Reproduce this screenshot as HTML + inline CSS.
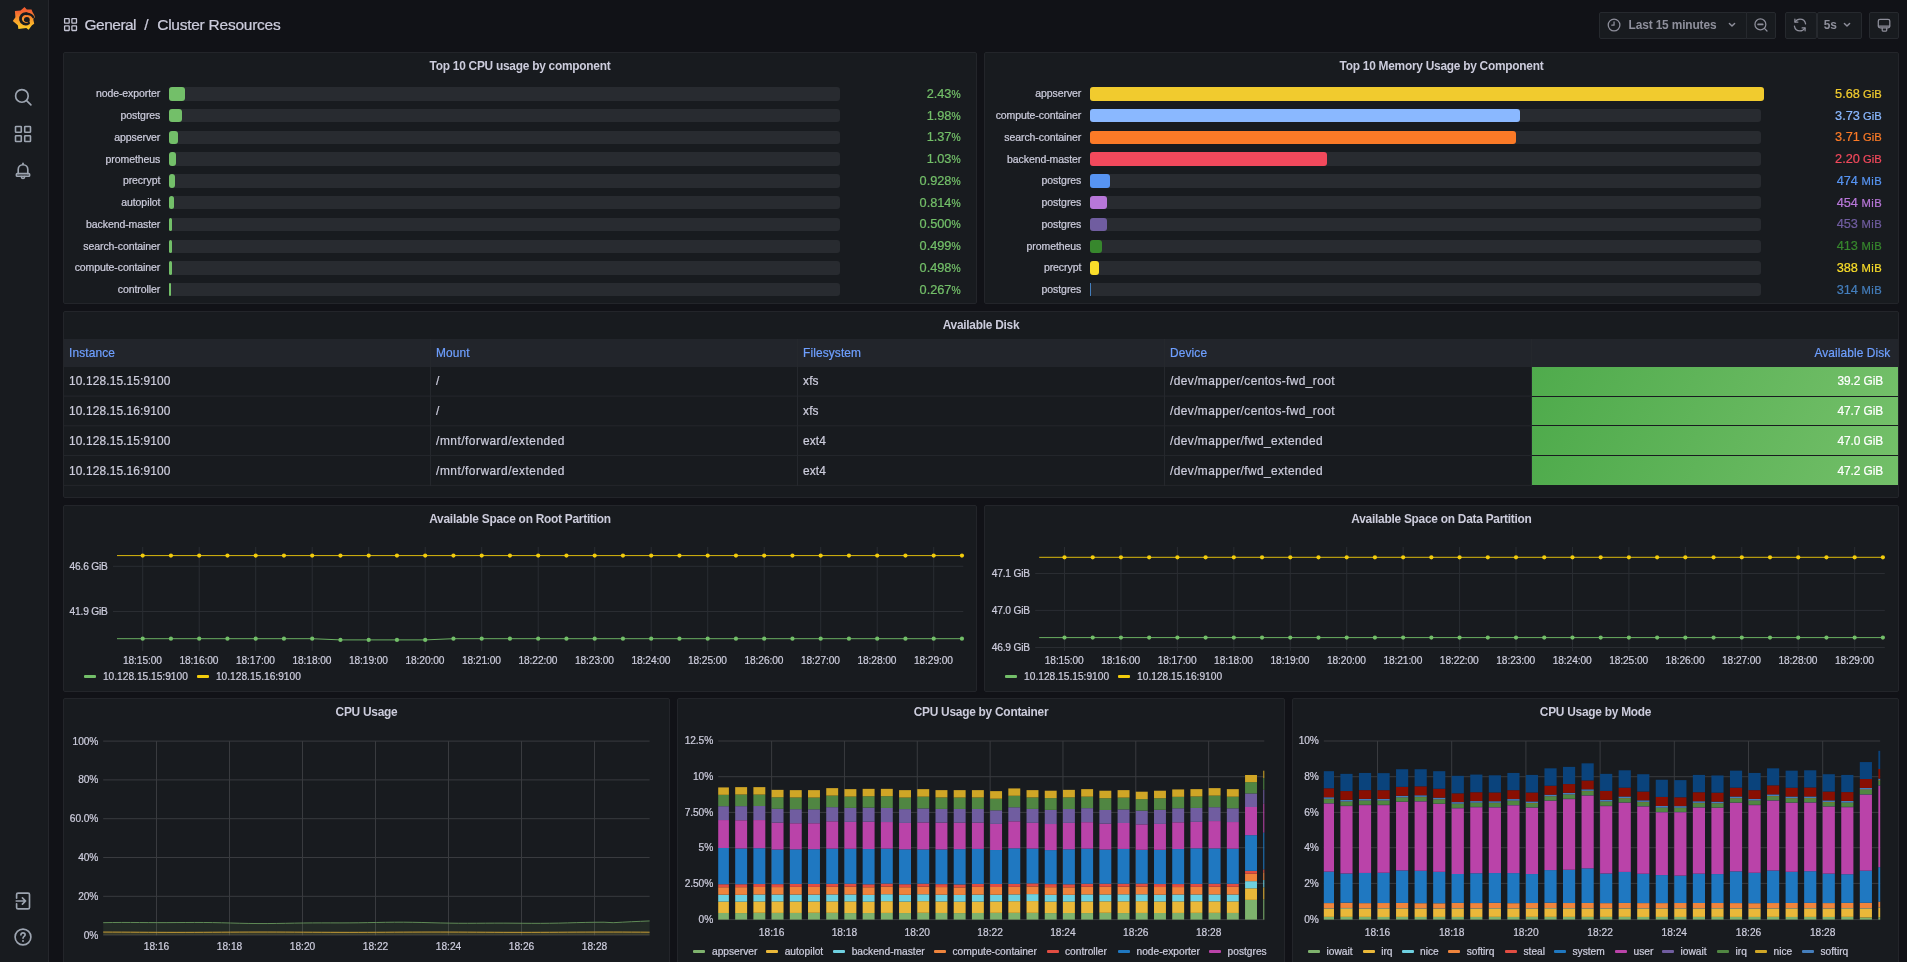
<!DOCTYPE html>
<html lang="en"><head><meta charset="utf-8"><title>Cluster Resources - Grafana</title>
<style>
html,body{margin:0;padding:0}
html{width:1907px;height:962px;overflow:hidden;background:#111217}
body{-webkit-text-stroke:0.22px;position:relative;width:1907px;height:962px;overflow:hidden;background:#111217;font-family:"Liberation Sans",sans-serif;color:#ccccdc;font-size:11.9px}
.panel{position:absolute;background:#181b1f;border:1px solid #23252a;border-radius:2px;box-sizing:border-box}
.btn{position:absolute;background:#181b1f;border:1px solid #26292e;box-sizing:border-box;top:12px;height:27px}
svg{position:absolute;overflow:visible}
.ic{fill:none;stroke:#9da5b1;stroke-width:1.65;stroke-linecap:round;stroke-linejoin:round}
.ict{fill:none;stroke:#8e8f9b;stroke-width:1.25;stroke-linecap:round;stroke-linejoin:round}
</style></head><body>
<div id="root" style="position:absolute;left:0;top:0;width:1907px;height:962px;overflow:hidden;will-change:transform">

<div style="position:absolute;left:0;top:0;width:48px;height:962px;background:#181b1f;border-right:1px solid #25272c"></div>
<svg style="left:6px;top:2px" width="36" height="34" viewBox="0 0 36 34">
<defs><linearGradient id="lg" gradientUnits="userSpaceOnUse" x1="0" y1="27.8" x2="0" y2="5"><stop offset="0" stop-color="#fcd027"/><stop offset="0.45" stop-color="#f99a2c"/><stop offset="0.8" stop-color="#f46432"/><stop offset="1" stop-color="#f15b2d"/></linearGradient></defs>
<path fill="url(#lg)" d="M18.5 5.0 L20.8 7.4 L25.5 7.6 L26.5 10 L28.1 12.8 L29.0 15.4 L28.1 15.9 L27.3 17.5 L28.2 21.7 L26.0 23.2 L22.6 27.8 L20.3 26.1 L12.4 26.9 L11.8 23.2 L6.8 19.1 L9.4 15.2 L8.9 9.1 L14.6 8.4 Z"/>
<path fill="none" stroke="#181b1f" stroke-width="2.8" stroke-linecap="round" d="M22.57 21.04 A5.17 5.17 0 1 1 20.50 11.71"/>
<path fill="none" stroke="#181b1f" stroke-width="2.2" stroke-linecap="round" d="M20.50 11.71 C22.6 12.0 26.2 12.7 27.3 15.4"/>
<circle cx="20.85" cy="18.0" r="2.95" fill="#181b1f"/>
<path fill="none" stroke="#f8932b" stroke-width="1.0" stroke-linecap="round" d="M17.9 19.3 C18.4 20.3 19.8 20.7 21.2 20.5"/>
</svg>
<svg style="left:13.3px;top:87.3px" width="20" height="20" viewBox="0 0 20 20"><circle class="ic" cx="8.9" cy="8.9" r="6.3"/><path class="ic" d="M13.6 13.6 L17.9 17.9"/></svg>
<svg style="left:13.2px;top:124.19999999999999px" width="20" height="20" viewBox="0 0 20 20"><g transform="translate(10 10) scale(0.96) translate(-10 -10)"><rect class="ic" x="2.2" y="2.2" width="6" height="6" rx="0.6"/><rect class="ic" x="11.8" y="2.2" width="6" height="6" rx="0.6"/><rect class="ic" x="2.2" y="11.8" width="6" height="6" rx="0.6"/><rect class="ic" x="11.8" y="11.8" width="6" height="6" rx="0.6"/></g></svg>
<svg style="left:13.2px;top:161.2px" width="20" height="20" viewBox="0 0 20 20"><path class="ic" d="M5.2 12.6 V8.6 C5.2 5.8 7.3 3.7 10 3.7 C12.7 3.7 14.8 5.8 14.8 8.6 V12.6"/><path class="ic" d="M10 3.5 V2.2"/><rect class="ic" x="3.4" y="12.6" width="13.2" height="2.6" rx="0.8"/><path class="ic" d="M8.3 15.6 C8.5 16.9 9.2 17.5 10 17.5 C10.8 17.5 11.5 16.9 11.7 15.6"/></svg>
<svg style="left:13.100000000000001px;top:890.6px" width="20" height="20" viewBox="0 0 20 20"><path class="ic" d="M3.6 7.2 V3.6 C3.6 2.7 4.2 2.1 5.1 2.1 H15 C15.9 2.1 16.5 2.7 16.5 3.6 V16.4 C16.5 17.3 15.9 17.9 15 17.9 H5.1 C4.2 17.9 3.6 17.3 3.6 16.4 V12.8"/><path class="ic" d="M3.2 10 H12.6 M9.4 6.8 L12.6 10 L9.4 13.2"/></svg>
<svg style="left:13.2px;top:927px" width="20" height="20" viewBox="0 0 20 20"><circle class="ic" cx="10" cy="10" r="7.9"/><path class="ic" d="M7.9 8.0 C7.9 6.6 8.8 5.9 10 5.9 C11.2 5.9 12.1 6.7 12.1 7.8 C12.1 9.4 10 9.3 10 11.2"/><circle cx="10" cy="13.9" r="1" fill="#9da5b1"/></svg>
<svg style="left:63px;top:17px" width="16" height="16" viewBox="0 0 16 16"><g fill="none" stroke="#c4c4d4" stroke-width="1.3"><rect x="1.6" y="1.6" width="4.6" height="4.6" rx="0.4"/><rect x="8.9" y="1.6" width="4.6" height="4.6" rx="0.4"/><rect x="1.6" y="8.9" width="4.6" height="4.6" rx="0.4"/><rect x="8.9" y="8.9" width="4.6" height="4.6" rx="0.4"/></g></svg>
<div style="position:absolute;top:15.20px;height:20px;line-height:20px;font-size:15.5px;color:#ccccdc;white-space:nowrap;letter-spacing:-0.53px;left:84.60px;">General</div>
<div style="position:absolute;top:15.20px;height:20px;line-height:20px;font-size:15.5px;color:#ccccdc;white-space:nowrap;left:144.30px;">/</div>
<div style="position:absolute;top:15.20px;height:20px;line-height:20px;font-size:15.5px;color:#ccccdc;white-space:nowrap;letter-spacing:-0.25px;left:157.20px;">Cluster Resources</div>
<div class="btn" style="left:1599px;width:148px;border-radius:2px 0 0 2px"></div>
<div class="btn" style="left:1746px;width:30px;border-radius:0 2px 2px 0"></div>
<div class="btn" style="left:1785px;width:31.5px;border-radius:2px"></div>
<div class="btn" style="left:1816.6px;width:45.4px;border-radius:2px"></div>
<div class="btn" style="left:1869px;width:30px;border-radius:2px"></div>
<svg style="left:1605.5px;top:16.5px" width="16" height="16" viewBox="0 0 16 16"><circle class="ict" cx="8.05" cy="8.05" r="5.85"/><path class="ict" d="M8.05 4.9 V8.2 H5.8"/></svg>
<div style="position:absolute;top:17.20px;height:16px;line-height:16px;font-size:11.9px;color:#8e8f9b;white-space:nowrap;font-weight:700;-webkit-text-stroke:0;letter-spacing:-0.14px;left:1628.60px;">Last 15 minutes</div>
<svg style="left:1726px;top:19px" width="12" height="12" viewBox="0 0 12 12"><path class="ict" style="stroke-width:1.45" d="M3.4 4.5 L6 7.1 L8.6 4.5"/></svg>
<svg style="left:1752.5px;top:16.5px" width="16" height="16" viewBox="0 0 16 16"><circle class="ict" cx="7.4" cy="7.4" r="5.45"/><path class="ict" d="M11.4 11.4 L14.0 14.0"/><path class="ict" style="stroke-width:1.7" d="M5.1 7.4 H9.7"/></svg>
<svg style="left:1792.4px;top:16.6px" width="16" height="16" viewBox="0 0 16 16"><path class="ict" d="M13.6 6.9 C13.1 4 10.7 2.1 8 2.1 C5.9 2.1 4.2 3.2 3.1 4.9"/><path class="ict" d="M2.9 2.2 V5.1 H5.9"/><path class="ict" d="M2.4 9.1 C2.9 12 5.3 13.9 8 13.9 C10.1 13.9 11.8 12.8 12.9 11.1"/><path class="ict" d="M13.1 13.8 V10.9 H10.1"/></svg>
<div style="position:absolute;top:17.20px;height:16px;line-height:16px;font-size:11.9px;color:#8e8f9b;white-space:nowrap;font-weight:700;-webkit-text-stroke:0;letter-spacing:-0.1px;left:1823.70px;">5s</div>
<svg style="left:1840.8px;top:19px" width="12" height="12" viewBox="0 0 12 12"><path class="ict" style="stroke-width:1.45" d="M3.4 4.5 L6 7.1 L8.6 4.5"/></svg>
<svg style="left:1875.5px;top:16.9px" width="16" height="16" viewBox="0 0 16 16"><rect class="ict" x="2.3" y="2.3" width="11.5" height="8.5" rx="1.8"/><path class="ict" d="M2.4 9.1 H13.7"/><path class="ict" d="M6.2 11.0 V13.3 Q6.2 14 6.9 14 H10 Q10.7 14 10.7 13.3 V11.0"/></svg>
<div class="panel" style="left:63px;top:52px;width:914px;height:252px"></div>
<div style="position:absolute;top:57.70px;height:17px;line-height:17px;font-size:11.9px;color:#ccccdc;white-space:nowrap;font-weight:700;-webkit-text-stroke:0;letter-spacing:-0.25px;left:220.00px;width:600px;text-align:center;">Top 10 CPU usage by component</div>
<div class="panel" style="left:984px;top:52px;width:915px;height:252px"></div>
<div style="position:absolute;top:57.70px;height:17px;line-height:17px;font-size:11.9px;color:#ccccdc;white-space:nowrap;font-weight:700;-webkit-text-stroke:0;letter-spacing:-0.25px;left:1141.50px;width:600px;text-align:center;">Top 10 Memory Usage by Component</div>
<div style="position:absolute;top:86.32px;height:14px;line-height:14px;font-size:10.5px;color:#ccccdc;white-space:nowrap;letter-spacing:-0.08px;right:1746.70px;margin-right:0.08px;">node-exporter</div>
<div style="position:absolute;left:169.00px;top:87.20px;width:671.00px;height:13.45px;background:#282b30;border-radius:3px"></div>
<div style="position:absolute;left:169.00px;top:87.20px;width:16.31px;height:13.45px;background:#73bf69;border-radius:3px"></div>
<div style="position:absolute;top:85.92px;height:16px;line-height:16px;font-size:12.75px;color:#73bf69;white-space:nowrap;right:946.40px;"><span style="font-size:12.75px">2.43</span><span style="font-size:10.3px">%</span></div>
<div style="position:absolute;top:108.08px;height:14px;line-height:14px;font-size:10.5px;color:#ccccdc;white-space:nowrap;letter-spacing:-0.08px;right:1746.70px;margin-right:0.08px;">postgres</div>
<div style="position:absolute;left:169.00px;top:108.96px;width:671.00px;height:13.45px;background:#282b30;border-radius:3px"></div>
<div style="position:absolute;left:169.00px;top:108.96px;width:13.29px;height:13.45px;background:#73bf69;border-radius:3px"></div>
<div style="position:absolute;top:107.69px;height:16px;line-height:16px;font-size:12.75px;color:#73bf69;white-space:nowrap;right:946.40px;"><span style="font-size:12.75px">1.98</span><span style="font-size:10.3px">%</span></div>
<div style="position:absolute;top:129.84px;height:14px;line-height:14px;font-size:10.5px;color:#ccccdc;white-space:nowrap;letter-spacing:-0.08px;right:1746.70px;margin-right:0.08px;">appserver</div>
<div style="position:absolute;left:169.00px;top:130.72px;width:671.00px;height:13.45px;background:#282b30;border-radius:3px"></div>
<div style="position:absolute;left:169.00px;top:130.72px;width:9.19px;height:13.45px;background:#73bf69;border-radius:3px"></div>
<div style="position:absolute;top:129.44px;height:16px;line-height:16px;font-size:12.75px;color:#73bf69;white-space:nowrap;right:946.40px;"><span style="font-size:12.75px">1.37</span><span style="font-size:10.3px">%</span></div>
<div style="position:absolute;top:151.61px;height:14px;line-height:14px;font-size:10.5px;color:#ccccdc;white-space:nowrap;letter-spacing:-0.08px;right:1746.70px;margin-right:0.08px;">prometheus</div>
<div style="position:absolute;left:169.00px;top:152.48px;width:671.00px;height:13.45px;background:#282b30;border-radius:3px"></div>
<div style="position:absolute;left:169.00px;top:152.48px;width:6.91px;height:13.45px;background:#73bf69;border-radius:3px"></div>
<div style="position:absolute;top:151.21px;height:16px;line-height:16px;font-size:12.75px;color:#73bf69;white-space:nowrap;right:946.40px;"><span style="font-size:12.75px">1.03</span><span style="font-size:10.3px">%</span></div>
<div style="position:absolute;top:173.37px;height:14px;line-height:14px;font-size:10.5px;color:#ccccdc;white-space:nowrap;letter-spacing:-0.08px;right:1746.70px;margin-right:0.08px;">precrypt</div>
<div style="position:absolute;left:169.00px;top:174.24px;width:671.00px;height:13.45px;background:#282b30;border-radius:3px"></div>
<div style="position:absolute;left:169.00px;top:174.24px;width:6.23px;height:13.45px;background:#73bf69;border-radius:3px"></div>
<div style="position:absolute;top:172.97px;height:16px;line-height:16px;font-size:12.75px;color:#73bf69;white-space:nowrap;right:946.40px;"><span style="font-size:12.75px">0.928</span><span style="font-size:10.3px">%</span></div>
<div style="position:absolute;top:195.12px;height:14px;line-height:14px;font-size:10.5px;color:#ccccdc;white-space:nowrap;letter-spacing:-0.08px;right:1746.70px;margin-right:0.08px;">autopilot</div>
<div style="position:absolute;left:169.00px;top:196.00px;width:671.00px;height:13.45px;background:#282b30;border-radius:3px"></div>
<div style="position:absolute;left:169.00px;top:196.00px;width:5.46px;height:13.45px;background:#73bf69;border-radius:3px"></div>
<div style="position:absolute;top:194.72px;height:16px;line-height:16px;font-size:12.75px;color:#73bf69;white-space:nowrap;right:946.40px;"><span style="font-size:12.75px">0.814</span><span style="font-size:10.3px">%</span></div>
<div style="position:absolute;top:216.88px;height:14px;line-height:14px;font-size:10.5px;color:#ccccdc;white-space:nowrap;letter-spacing:-0.08px;right:1746.70px;margin-right:0.08px;">backend-master</div>
<div style="position:absolute;left:169.00px;top:217.76px;width:671.00px;height:13.45px;background:#282b30;border-radius:3px"></div>
<div style="position:absolute;left:169.00px;top:217.76px;width:3.35px;height:13.45px;background:#73bf69;border-radius:3px"></div>
<div style="position:absolute;top:216.48px;height:16px;line-height:16px;font-size:12.75px;color:#73bf69;white-space:nowrap;right:946.40px;"><span style="font-size:12.75px">0.500</span><span style="font-size:10.3px">%</span></div>
<div style="position:absolute;top:238.65px;height:14px;line-height:14px;font-size:10.5px;color:#ccccdc;white-space:nowrap;letter-spacing:-0.08px;right:1746.70px;margin-right:0.08px;">search-container</div>
<div style="position:absolute;left:169.00px;top:239.52px;width:671.00px;height:13.45px;background:#282b30;border-radius:3px"></div>
<div style="position:absolute;left:169.00px;top:239.52px;width:3.35px;height:13.45px;background:#73bf69;border-radius:3px"></div>
<div style="position:absolute;top:238.25px;height:16px;line-height:16px;font-size:12.75px;color:#73bf69;white-space:nowrap;right:946.40px;"><span style="font-size:12.75px">0.499</span><span style="font-size:10.3px">%</span></div>
<div style="position:absolute;top:260.41px;height:14px;line-height:14px;font-size:10.5px;color:#ccccdc;white-space:nowrap;letter-spacing:-0.08px;right:1746.70px;margin-right:0.08px;">compute-container</div>
<div style="position:absolute;left:169.00px;top:261.28px;width:671.00px;height:13.45px;background:#282b30;border-radius:3px"></div>
<div style="position:absolute;left:169.00px;top:261.28px;width:3.34px;height:13.45px;background:#73bf69;border-radius:3px"></div>
<div style="position:absolute;top:260.01px;height:16px;line-height:16px;font-size:12.75px;color:#73bf69;white-space:nowrap;right:946.40px;"><span style="font-size:12.75px">0.498</span><span style="font-size:10.3px">%</span></div>
<div style="position:absolute;top:282.17px;height:14px;line-height:14px;font-size:10.5px;color:#ccccdc;white-space:nowrap;letter-spacing:-0.08px;right:1746.70px;margin-right:0.08px;">controller</div>
<div style="position:absolute;left:169.00px;top:283.04px;width:671.00px;height:13.45px;background:#282b30;border-radius:3px"></div>
<div style="position:absolute;left:169.00px;top:283.04px;width:1.79px;height:13.45px;background:#73bf69;border-radius:3px"></div>
<div style="position:absolute;top:281.77px;height:16px;line-height:16px;font-size:12.75px;color:#73bf69;white-space:nowrap;right:946.40px;"><span style="font-size:12.75px">0.267</span><span style="font-size:10.3px">%</span></div>
<div style="position:absolute;top:86.32px;height:14px;line-height:14px;font-size:10.5px;color:#ccccdc;white-space:nowrap;letter-spacing:-0.08px;right:825.70px;margin-right:0.08px;">appserver</div>
<div style="position:absolute;left:1090.00px;top:87.20px;width:671.00px;height:13.45px;background:#282b30;border-radius:3px"></div>
<div style="position:absolute;left:1090.00px;top:87.20px;width:674.00px;height:13.45px;background:#f1cb2e;border-radius:3px"></div>
<div style="position:absolute;top:85.92px;height:16px;line-height:16px;font-size:12.75px;color:#f1cb2e;white-space:nowrap;right:25.30px;"><span style="font-size:12.75px">5.68</span><span style="font-size:11.2px;"> GiB</span></div>
<div style="position:absolute;top:108.08px;height:14px;line-height:14px;font-size:10.5px;color:#ccccdc;white-space:nowrap;letter-spacing:-0.08px;right:825.70px;margin-right:0.08px;">compute-container</div>
<div style="position:absolute;left:1090.00px;top:108.96px;width:671.00px;height:13.45px;background:#282b30;border-radius:3px"></div>
<div style="position:absolute;left:1090.00px;top:108.96px;width:430.00px;height:13.45px;background:#8ab8ff;border-radius:3px"></div>
<div style="position:absolute;top:107.69px;height:16px;line-height:16px;font-size:12.75px;color:#8ab8ff;white-space:nowrap;right:25.30px;"><span style="font-size:12.75px">3.73</span><span style="font-size:11.2px;"> GiB</span></div>
<div style="position:absolute;top:129.84px;height:14px;line-height:14px;font-size:10.5px;color:#ccccdc;white-space:nowrap;letter-spacing:-0.08px;right:825.70px;margin-right:0.08px;">search-container</div>
<div style="position:absolute;left:1090.00px;top:130.72px;width:671.00px;height:13.45px;background:#282b30;border-radius:3px"></div>
<div style="position:absolute;left:1090.00px;top:130.72px;width:426.00px;height:13.45px;background:#fb7a27;border-radius:3px"></div>
<div style="position:absolute;top:129.44px;height:16px;line-height:16px;font-size:12.75px;color:#fb7a27;white-space:nowrap;right:25.30px;"><span style="font-size:12.75px">3.71</span><span style="font-size:11.2px;"> GiB</span></div>
<div style="position:absolute;top:151.61px;height:14px;line-height:14px;font-size:10.5px;color:#ccccdc;white-space:nowrap;letter-spacing:-0.08px;right:825.70px;margin-right:0.08px;">backend-master</div>
<div style="position:absolute;left:1090.00px;top:152.48px;width:671.00px;height:13.45px;background:#282b30;border-radius:3px"></div>
<div style="position:absolute;left:1090.00px;top:152.48px;width:237.00px;height:13.45px;background:#f2495c;border-radius:3px"></div>
<div style="position:absolute;top:151.21px;height:16px;line-height:16px;font-size:12.75px;color:#f2495c;white-space:nowrap;right:25.30px;"><span style="font-size:12.75px">2.20</span><span style="font-size:11.2px;"> GiB</span></div>
<div style="position:absolute;top:173.37px;height:14px;line-height:14px;font-size:10.5px;color:#ccccdc;white-space:nowrap;letter-spacing:-0.08px;right:825.70px;margin-right:0.08px;">postgres</div>
<div style="position:absolute;left:1090.00px;top:174.24px;width:671.00px;height:13.45px;background:#282b30;border-radius:3px"></div>
<div style="position:absolute;left:1090.00px;top:174.24px;width:20.00px;height:13.45px;background:#5794f2;border-radius:3px"></div>
<div style="position:absolute;top:172.97px;height:16px;line-height:16px;font-size:12.75px;color:#5794f2;white-space:nowrap;right:25.30px;"><span style="font-size:12.75px">474</span><span style="font-size:11.2px;letter-spacing:0.45px;margin-right:-0.45px;"> MiB</span></div>
<div style="position:absolute;top:195.12px;height:14px;line-height:14px;font-size:10.5px;color:#ccccdc;white-space:nowrap;letter-spacing:-0.08px;right:825.70px;margin-right:0.08px;">postgres</div>
<div style="position:absolute;left:1090.00px;top:196.00px;width:671.00px;height:13.45px;background:#282b30;border-radius:3px"></div>
<div style="position:absolute;left:1090.00px;top:196.00px;width:17.00px;height:13.45px;background:#b877d9;border-radius:3px"></div>
<div style="position:absolute;top:194.72px;height:16px;line-height:16px;font-size:12.75px;color:#b877d9;white-space:nowrap;right:25.30px;"><span style="font-size:12.75px">454</span><span style="font-size:11.2px;letter-spacing:0.45px;margin-right:-0.45px;"> MiB</span></div>
<div style="position:absolute;top:216.88px;height:14px;line-height:14px;font-size:10.5px;color:#ccccdc;white-space:nowrap;letter-spacing:-0.08px;right:825.70px;margin-right:0.08px;">postgres</div>
<div style="position:absolute;left:1090.00px;top:217.76px;width:671.00px;height:13.45px;background:#282b30;border-radius:3px"></div>
<div style="position:absolute;left:1090.00px;top:217.76px;width:17.00px;height:13.45px;background:#705da0;border-radius:3px"></div>
<div style="position:absolute;top:216.48px;height:16px;line-height:16px;font-size:12.75px;color:#705da0;white-space:nowrap;right:25.30px;"><span style="font-size:12.75px">453</span><span style="font-size:11.2px;letter-spacing:0.45px;margin-right:-0.45px;"> MiB</span></div>
<div style="position:absolute;top:238.65px;height:14px;line-height:14px;font-size:10.5px;color:#ccccdc;white-space:nowrap;letter-spacing:-0.08px;right:825.70px;margin-right:0.08px;">prometheus</div>
<div style="position:absolute;left:1090.00px;top:239.52px;width:671.00px;height:13.45px;background:#282b30;border-radius:3px"></div>
<div style="position:absolute;left:1090.00px;top:239.52px;width:12.00px;height:13.45px;background:#37872d;border-radius:3px"></div>
<div style="position:absolute;top:238.25px;height:16px;line-height:16px;font-size:12.75px;color:#37872d;white-space:nowrap;right:25.30px;"><span style="font-size:12.75px">413</span><span style="font-size:11.2px;letter-spacing:0.45px;margin-right:-0.45px;"> MiB</span></div>
<div style="position:absolute;top:260.41px;height:14px;line-height:14px;font-size:10.5px;color:#ccccdc;white-space:nowrap;letter-spacing:-0.08px;right:825.70px;margin-right:0.08px;">precrypt</div>
<div style="position:absolute;left:1090.00px;top:261.28px;width:671.00px;height:13.45px;background:#282b30;border-radius:3px"></div>
<div style="position:absolute;left:1090.00px;top:261.28px;width:9.20px;height:13.45px;background:#fade2a;border-radius:3px"></div>
<div style="position:absolute;top:260.01px;height:16px;line-height:16px;font-size:12.75px;color:#fade2a;white-space:nowrap;right:25.30px;"><span style="font-size:12.75px">388</span><span style="font-size:11.2px;letter-spacing:0.45px;margin-right:-0.45px;"> MiB</span></div>
<div style="position:absolute;top:282.17px;height:14px;line-height:14px;font-size:10.5px;color:#ccccdc;white-space:nowrap;letter-spacing:-0.08px;right:825.70px;margin-right:0.08px;">postgres</div>
<div style="position:absolute;left:1090.00px;top:283.04px;width:671.00px;height:13.45px;background:#282b30;border-radius:3px"></div>
<div style="position:absolute;left:1090.00px;top:283.04px;width:1.00px;height:13.45px;background:#447ebc;"></div>
<div style="position:absolute;top:281.77px;height:16px;line-height:16px;font-size:12.75px;color:#447ebc;white-space:nowrap;right:25.30px;"><span style="font-size:12.75px">314</span><span style="font-size:11.2px;letter-spacing:0.45px;margin-right:-0.45px;"> MiB</span></div>
<div class="panel" style="left:63px;top:311px;width:1836px;height:187px"></div>
<div style="position:absolute;top:316.70px;height:17px;line-height:17px;font-size:11.9px;color:#ccccdc;white-space:nowrap;font-weight:700;-webkit-text-stroke:0;letter-spacing:-0.25px;left:681.00px;width:600px;text-align:center;">Available Disk</div>
<div style="position:absolute;left:64.00px;top:339.00px;width:1834.00px;height:27.70px;background:#22252b;"></div>
<div style="position:absolute;top:345.20px;height:16px;line-height:16px;font-size:11.9px;color:#6e9fff;white-space:nowrap;letter-spacing:0.12px;left:69.10px;">Instance</div>
<div style="position:absolute;top:345.20px;height:16px;line-height:16px;font-size:11.9px;color:#6e9fff;white-space:nowrap;letter-spacing:0.12px;left:436.10px;">Mount</div>
<div style="position:absolute;top:345.20px;height:16px;line-height:16px;font-size:11.9px;color:#6e9fff;white-space:nowrap;letter-spacing:0.12px;left:803.10px;">Filesystem</div>
<div style="position:absolute;top:345.20px;height:16px;line-height:16px;font-size:11.9px;color:#6e9fff;white-space:nowrap;letter-spacing:0.12px;left:1170.10px;">Device</div>
<div style="position:absolute;top:345.20px;height:16px;line-height:16px;font-size:11.9px;color:#6e9fff;white-space:nowrap;letter-spacing:0.1px;right:16.80px;margin-right:-0.1px;">Available Disk</div>
<div style="position:absolute;left:430.00px;top:339.00px;width:1.00px;height:147.40px;background:#25282d;"></div>
<div style="position:absolute;left:797.00px;top:339.00px;width:1.00px;height:147.40px;background:#25282d;"></div>
<div style="position:absolute;left:1164.00px;top:339.00px;width:1.00px;height:147.40px;background:#25282d;"></div>
<div style="position:absolute;left:1531.00px;top:339.00px;width:1.00px;height:147.40px;background:#25282d;"></div>
<svg style="left:0;top:0" width="1907" height="962" viewBox="0 0 1907 962"><defs>
<linearGradient id="tg0" gradientUnits="userSpaceOnUse" x1="1571.5" y1="298.3" x2="1858.5" y2="464.1"><stop offset="0" stop-color="#4fab4c"/><stop offset="1" stop-color="#73bf69"/></linearGradient>
<linearGradient id="tg1" gradientUnits="userSpaceOnUse" x1="1571.5" y1="328.1" x2="1858.5" y2="493.8"><stop offset="0" stop-color="#4fab4c"/><stop offset="1" stop-color="#73bf69"/></linearGradient>
<linearGradient id="tg2" gradientUnits="userSpaceOnUse" x1="1571.5" y1="357.8" x2="1858.5" y2="523.6"><stop offset="0" stop-color="#4fab4c"/><stop offset="1" stop-color="#73bf69"/></linearGradient>
<linearGradient id="tg3" gradientUnits="userSpaceOnUse" x1="1571.5" y1="387.6" x2="1858.5" y2="553.3"><stop offset="0" stop-color="#4fab4c"/><stop offset="1" stop-color="#73bf69"/></linearGradient>
</defs>
<rect x="1532" y="367" width="366" height="29" fill="url(#tg0)" shape-rendering="crispEdges"/>
<rect x="64" y="395.65" width="1467" height="0.85" fill="#26292e"/>
<rect x="1532" y="397" width="366" height="28" fill="url(#tg1)" shape-rendering="crispEdges"/>
<rect x="64" y="425.40" width="1467" height="0.85" fill="#26292e"/>
<rect x="1532" y="426" width="366" height="29" fill="url(#tg2)" shape-rendering="crispEdges"/>
<rect x="64" y="455.15" width="1467" height="0.85" fill="#26292e"/>
<rect x="1532" y="456" width="366" height="29" fill="url(#tg3)" shape-rendering="crispEdges"/>
<rect x="64" y="484.90" width="1467" height="0.85" fill="#26292e"/>
</svg>
<div style="position:absolute;top:373.25px;height:16px;line-height:16px;font-size:11.9px;color:#ccccdc;white-space:nowrap;letter-spacing:0.13px;left:69.10px;">10.128.15.15:9100</div>
<div style="position:absolute;top:373.25px;height:16px;line-height:16px;font-size:11.9px;color:#ccccdc;white-space:nowrap;letter-spacing:0.5px;left:436.10px;">/</div>
<div style="position:absolute;top:373.25px;height:16px;line-height:16px;font-size:11.9px;color:#ccccdc;white-space:nowrap;letter-spacing:0.1px;left:803.10px;">xfs</div>
<div style="position:absolute;top:373.25px;height:16px;line-height:16px;font-size:11.9px;color:#ccccdc;white-space:nowrap;letter-spacing:0.4px;left:1170.10px;">/dev/mapper/centos-fwd_root</div>
<div style="position:absolute;top:373.25px;height:16px;line-height:16px;font-size:11.9px;color:#ffffff;white-space:nowrap;letter-spacing:-0.08px;right:23.80px;margin-right:0.08px;">39.2 GiB</div>
<div style="position:absolute;top:403.00px;height:16px;line-height:16px;font-size:11.9px;color:#ccccdc;white-space:nowrap;letter-spacing:0.13px;left:69.10px;">10.128.15.16:9100</div>
<div style="position:absolute;top:403.00px;height:16px;line-height:16px;font-size:11.9px;color:#ccccdc;white-space:nowrap;letter-spacing:0.5px;left:436.10px;">/</div>
<div style="position:absolute;top:403.00px;height:16px;line-height:16px;font-size:11.9px;color:#ccccdc;white-space:nowrap;letter-spacing:0.1px;left:803.10px;">xfs</div>
<div style="position:absolute;top:403.00px;height:16px;line-height:16px;font-size:11.9px;color:#ccccdc;white-space:nowrap;letter-spacing:0.4px;left:1170.10px;">/dev/mapper/centos-fwd_root</div>
<div style="position:absolute;top:403.00px;height:16px;line-height:16px;font-size:11.9px;color:#ffffff;white-space:nowrap;letter-spacing:-0.08px;right:23.80px;margin-right:0.08px;">47.7 GiB</div>
<div style="position:absolute;top:432.75px;height:16px;line-height:16px;font-size:11.9px;color:#ccccdc;white-space:nowrap;letter-spacing:0.13px;left:69.10px;">10.128.15.15:9100</div>
<div style="position:absolute;top:432.75px;height:16px;line-height:16px;font-size:11.9px;color:#ccccdc;white-space:nowrap;letter-spacing:0.5px;left:436.10px;">/mnt/forward/extended</div>
<div style="position:absolute;top:432.75px;height:16px;line-height:16px;font-size:11.9px;color:#ccccdc;white-space:nowrap;letter-spacing:0.1px;left:803.10px;">ext4</div>
<div style="position:absolute;top:432.75px;height:16px;line-height:16px;font-size:11.9px;color:#ccccdc;white-space:nowrap;letter-spacing:0.4px;left:1170.10px;">/dev/mapper/fwd_extended</div>
<div style="position:absolute;top:432.75px;height:16px;line-height:16px;font-size:11.9px;color:#ffffff;white-space:nowrap;letter-spacing:-0.08px;right:23.80px;margin-right:0.08px;">47.0 GiB</div>
<div style="position:absolute;top:462.50px;height:16px;line-height:16px;font-size:11.9px;color:#ccccdc;white-space:nowrap;letter-spacing:0.13px;left:69.10px;">10.128.15.16:9100</div>
<div style="position:absolute;top:462.50px;height:16px;line-height:16px;font-size:11.9px;color:#ccccdc;white-space:nowrap;letter-spacing:0.5px;left:436.10px;">/mnt/forward/extended</div>
<div style="position:absolute;top:462.50px;height:16px;line-height:16px;font-size:11.9px;color:#ccccdc;white-space:nowrap;letter-spacing:0.1px;left:803.10px;">ext4</div>
<div style="position:absolute;top:462.50px;height:16px;line-height:16px;font-size:11.9px;color:#ccccdc;white-space:nowrap;letter-spacing:0.4px;left:1170.10px;">/dev/mapper/fwd_extended</div>
<div style="position:absolute;top:462.50px;height:16px;line-height:16px;font-size:11.9px;color:#ffffff;white-space:nowrap;letter-spacing:-0.08px;right:23.80px;margin-right:0.08px;">47.2 GiB</div>
<div class="panel" style="left:63px;top:505px;width:914px;height:187px"></div>
<div style="position:absolute;top:510.70px;height:17px;line-height:17px;font-size:11.9px;color:#ccccdc;white-space:nowrap;font-weight:700;-webkit-text-stroke:0;letter-spacing:-0.25px;left:220.00px;width:600px;text-align:center;">Available Space on Root Partition</div>
<svg style="left:0;top:0" width="1907" height="962" viewBox="0 0 1907 962"><rect x="142.20" y="547" width="1" height="104" fill="#2a2d32"/><rect x="198.70" y="547" width="1" height="104" fill="#2a2d32"/><rect x="255.20" y="547" width="1" height="104" fill="#2a2d32"/><rect x="311.70" y="547" width="1" height="104" fill="#2a2d32"/><rect x="368.20" y="547" width="1" height="104" fill="#2a2d32"/><rect x="424.70" y="547" width="1" height="104" fill="#2a2d32"/><rect x="481.20" y="547" width="1" height="104" fill="#2a2d32"/><rect x="537.70" y="547" width="1" height="104" fill="#2a2d32"/><rect x="594.20" y="547" width="1" height="104" fill="#2a2d32"/><rect x="650.70" y="547" width="1" height="104" fill="#2a2d32"/><rect x="707.20" y="547" width="1" height="104" fill="#2a2d32"/><rect x="763.70" y="547" width="1" height="104" fill="#2a2d32"/><rect x="820.20" y="547" width="1" height="104" fill="#2a2d32"/><rect x="876.70" y="547" width="1" height="104" fill="#2a2d32"/><rect x="933.20" y="547" width="1" height="104" fill="#2a2d32"/><rect x="113.00" y="565.80" width="850.30" height="1" fill="#2a2d32"/><rect x="113.00" y="611.00" width="850.30" height="1" fill="#2a2d32"/><path d="M117.00 638.70 L142.70 638.70 L170.95 638.70 L199.20 638.70 L227.45 638.70 L255.70 638.70 L283.95 638.70 L312.20 638.70 L340.45 639.90 L368.70 639.90 L396.95 639.90 L425.20 639.90 L453.45 638.70 L481.70 638.70 L509.95 638.70 L538.20 638.70 L566.45 638.70 L594.70 638.70 L622.95 638.70 L651.20 638.70 L679.45 638.70 L707.70 638.70 L735.95 638.70 L764.20 638.70 L792.45 638.70 L820.70 638.70 L848.95 638.70 L877.20 638.70 L905.45 638.70 L933.70 638.70 L961.95 638.70" fill="none" stroke="#73bf69" stroke-width="0.9"/><circle cx="142.70" cy="638.70" r="2.1" fill="#73bf69"/><circle cx="170.95" cy="638.70" r="2.1" fill="#73bf69"/><circle cx="199.20" cy="638.70" r="2.1" fill="#73bf69"/><circle cx="227.45" cy="638.70" r="2.1" fill="#73bf69"/><circle cx="255.70" cy="638.70" r="2.1" fill="#73bf69"/><circle cx="283.95" cy="638.70" r="2.1" fill="#73bf69"/><circle cx="312.20" cy="638.70" r="2.1" fill="#73bf69"/><circle cx="340.45" cy="639.90" r="2.1" fill="#73bf69"/><circle cx="368.70" cy="639.90" r="2.1" fill="#73bf69"/><circle cx="396.95" cy="639.90" r="2.1" fill="#73bf69"/><circle cx="425.20" cy="639.90" r="2.1" fill="#73bf69"/><circle cx="453.45" cy="638.70" r="2.1" fill="#73bf69"/><circle cx="481.70" cy="638.70" r="2.1" fill="#73bf69"/><circle cx="509.95" cy="638.70" r="2.1" fill="#73bf69"/><circle cx="538.20" cy="638.70" r="2.1" fill="#73bf69"/><circle cx="566.45" cy="638.70" r="2.1" fill="#73bf69"/><circle cx="594.70" cy="638.70" r="2.1" fill="#73bf69"/><circle cx="622.95" cy="638.70" r="2.1" fill="#73bf69"/><circle cx="651.20" cy="638.70" r="2.1" fill="#73bf69"/><circle cx="679.45" cy="638.70" r="2.1" fill="#73bf69"/><circle cx="707.70" cy="638.70" r="2.1" fill="#73bf69"/><circle cx="735.95" cy="638.70" r="2.1" fill="#73bf69"/><circle cx="764.20" cy="638.70" r="2.1" fill="#73bf69"/><circle cx="792.45" cy="638.70" r="2.1" fill="#73bf69"/><circle cx="820.70" cy="638.70" r="2.1" fill="#73bf69"/><circle cx="848.95" cy="638.70" r="2.1" fill="#73bf69"/><circle cx="877.20" cy="638.70" r="2.1" fill="#73bf69"/><circle cx="905.45" cy="638.70" r="2.1" fill="#73bf69"/><circle cx="933.70" cy="638.70" r="2.1" fill="#73bf69"/><circle cx="961.95" cy="638.70" r="2.1" fill="#73bf69"/><path d="M117.00 555.60 L142.70 555.60 L170.95 555.60 L199.20 555.60 L227.45 555.60 L255.70 555.60 L283.95 555.60 L312.20 555.60 L340.45 555.60 L368.70 555.60 L396.95 555.60 L425.20 555.60 L453.45 555.60 L481.70 555.60 L509.95 555.60 L538.20 555.60 L566.45 555.60 L594.70 555.60 L622.95 555.60 L651.20 555.60 L679.45 555.60 L707.70 555.60 L735.95 555.60 L764.20 555.60 L792.45 555.60 L820.70 555.60 L848.95 555.60 L877.20 555.60 L905.45 555.60 L933.70 555.60 L961.95 555.60" fill="none" stroke="#f2cc0c" stroke-width="0.9"/><circle cx="142.70" cy="555.60" r="2.1" fill="#f2cc0c"/><circle cx="170.95" cy="555.60" r="2.1" fill="#f2cc0c"/><circle cx="199.20" cy="555.60" r="2.1" fill="#f2cc0c"/><circle cx="227.45" cy="555.60" r="2.1" fill="#f2cc0c"/><circle cx="255.70" cy="555.60" r="2.1" fill="#f2cc0c"/><circle cx="283.95" cy="555.60" r="2.1" fill="#f2cc0c"/><circle cx="312.20" cy="555.60" r="2.1" fill="#f2cc0c"/><circle cx="340.45" cy="555.60" r="2.1" fill="#f2cc0c"/><circle cx="368.70" cy="555.60" r="2.1" fill="#f2cc0c"/><circle cx="396.95" cy="555.60" r="2.1" fill="#f2cc0c"/><circle cx="425.20" cy="555.60" r="2.1" fill="#f2cc0c"/><circle cx="453.45" cy="555.60" r="2.1" fill="#f2cc0c"/><circle cx="481.70" cy="555.60" r="2.1" fill="#f2cc0c"/><circle cx="509.95" cy="555.60" r="2.1" fill="#f2cc0c"/><circle cx="538.20" cy="555.60" r="2.1" fill="#f2cc0c"/><circle cx="566.45" cy="555.60" r="2.1" fill="#f2cc0c"/><circle cx="594.70" cy="555.60" r="2.1" fill="#f2cc0c"/><circle cx="622.95" cy="555.60" r="2.1" fill="#f2cc0c"/><circle cx="651.20" cy="555.60" r="2.1" fill="#f2cc0c"/><circle cx="679.45" cy="555.60" r="2.1" fill="#f2cc0c"/><circle cx="707.70" cy="555.60" r="2.1" fill="#f2cc0c"/><circle cx="735.95" cy="555.60" r="2.1" fill="#f2cc0c"/><circle cx="764.20" cy="555.60" r="2.1" fill="#f2cc0c"/><circle cx="792.45" cy="555.60" r="2.1" fill="#f2cc0c"/><circle cx="820.70" cy="555.60" r="2.1" fill="#f2cc0c"/><circle cx="848.95" cy="555.60" r="2.1" fill="#f2cc0c"/><circle cx="877.20" cy="555.60" r="2.1" fill="#f2cc0c"/><circle cx="905.45" cy="555.60" r="2.1" fill="#f2cc0c"/><circle cx="933.70" cy="555.60" r="2.1" fill="#f2cc0c"/><circle cx="961.95" cy="555.60" r="2.1" fill="#f2cc0c"/></svg>
<div style="position:absolute;top:559.60px;height:14px;line-height:14px;font-size:10.2px;color:#ccccdc;white-space:nowrap;letter-spacing:-0.2px;right:1799.20px;margin-right:0.2px;">46.6 GiB</div>
<div style="position:absolute;top:604.80px;height:14px;line-height:14px;font-size:10.2px;color:#ccccdc;white-space:nowrap;letter-spacing:-0.2px;right:1799.20px;margin-right:0.2px;">41.9 GiB</div>
<div style="position:absolute;top:654.00px;height:14px;line-height:14px;font-size:10.2px;color:#ccccdc;white-space:nowrap;letter-spacing:-0.1px;left:-157.60px;width:600px;text-align:center;">18:15:00</div>
<div style="position:absolute;top:654.00px;height:14px;line-height:14px;font-size:10.2px;color:#ccccdc;white-space:nowrap;letter-spacing:-0.1px;left:-101.10px;width:600px;text-align:center;">18:16:00</div>
<div style="position:absolute;top:654.00px;height:14px;line-height:14px;font-size:10.2px;color:#ccccdc;white-space:nowrap;letter-spacing:-0.1px;left:-44.60px;width:600px;text-align:center;">18:17:00</div>
<div style="position:absolute;top:654.00px;height:14px;line-height:14px;font-size:10.2px;color:#ccccdc;white-space:nowrap;letter-spacing:-0.1px;left:11.90px;width:600px;text-align:center;">18:18:00</div>
<div style="position:absolute;top:654.00px;height:14px;line-height:14px;font-size:10.2px;color:#ccccdc;white-space:nowrap;letter-spacing:-0.1px;left:68.40px;width:600px;text-align:center;">18:19:00</div>
<div style="position:absolute;top:654.00px;height:14px;line-height:14px;font-size:10.2px;color:#ccccdc;white-space:nowrap;letter-spacing:-0.1px;left:124.90px;width:600px;text-align:center;">18:20:00</div>
<div style="position:absolute;top:654.00px;height:14px;line-height:14px;font-size:10.2px;color:#ccccdc;white-space:nowrap;letter-spacing:-0.1px;left:181.40px;width:600px;text-align:center;">18:21:00</div>
<div style="position:absolute;top:654.00px;height:14px;line-height:14px;font-size:10.2px;color:#ccccdc;white-space:nowrap;letter-spacing:-0.1px;left:237.90px;width:600px;text-align:center;">18:22:00</div>
<div style="position:absolute;top:654.00px;height:14px;line-height:14px;font-size:10.2px;color:#ccccdc;white-space:nowrap;letter-spacing:-0.1px;left:294.40px;width:600px;text-align:center;">18:23:00</div>
<div style="position:absolute;top:654.00px;height:14px;line-height:14px;font-size:10.2px;color:#ccccdc;white-space:nowrap;letter-spacing:-0.1px;left:350.90px;width:600px;text-align:center;">18:24:00</div>
<div style="position:absolute;top:654.00px;height:14px;line-height:14px;font-size:10.2px;color:#ccccdc;white-space:nowrap;letter-spacing:-0.1px;left:407.40px;width:600px;text-align:center;">18:25:00</div>
<div style="position:absolute;top:654.00px;height:14px;line-height:14px;font-size:10.2px;color:#ccccdc;white-space:nowrap;letter-spacing:-0.1px;left:463.90px;width:600px;text-align:center;">18:26:00</div>
<div style="position:absolute;top:654.00px;height:14px;line-height:14px;font-size:10.2px;color:#ccccdc;white-space:nowrap;letter-spacing:-0.1px;left:520.40px;width:600px;text-align:center;">18:27:00</div>
<div style="position:absolute;top:654.00px;height:14px;line-height:14px;font-size:10.2px;color:#ccccdc;white-space:nowrap;letter-spacing:-0.1px;left:576.90px;width:600px;text-align:center;">18:28:00</div>
<div style="position:absolute;top:654.00px;height:14px;line-height:14px;font-size:10.2px;color:#ccccdc;white-space:nowrap;letter-spacing:-0.1px;left:633.40px;width:600px;text-align:center;">18:29:00</div>
<div style="position:absolute;left:84.10px;top:675.10px;width:12.00px;height:3.40px;background:#73bf69;border-radius:1px"></div>
<div style="position:absolute;top:670.10px;height:14px;line-height:14px;font-size:10.2px;color:#ccccdc;white-space:nowrap;left:102.90px;">10.128.15.15:9100</div>
<div style="position:absolute;left:197.10px;top:675.10px;width:12.00px;height:3.40px;background:#f2cc0c;border-radius:1px"></div>
<div style="position:absolute;top:670.10px;height:14px;line-height:14px;font-size:10.2px;color:#ccccdc;white-space:nowrap;left:215.90px;">10.128.15.16:9100</div>
<div class="panel" style="left:984px;top:505px;width:915px;height:187px"></div>
<div style="position:absolute;top:510.70px;height:17px;line-height:17px;font-size:11.9px;color:#ccccdc;white-space:nowrap;font-weight:700;-webkit-text-stroke:0;letter-spacing:-0.25px;left:1141.50px;width:600px;text-align:center;">Available Space on Data Partition</div>
<svg style="left:0;top:0" width="1907" height="962" viewBox="0 0 1907 962"><rect x="1064.00" y="547" width="1" height="104" fill="#2a2d32"/><rect x="1120.44" y="547" width="1" height="104" fill="#2a2d32"/><rect x="1176.88" y="547" width="1" height="104" fill="#2a2d32"/><rect x="1233.32" y="547" width="1" height="104" fill="#2a2d32"/><rect x="1289.76" y="547" width="1" height="104" fill="#2a2d32"/><rect x="1346.20" y="547" width="1" height="104" fill="#2a2d32"/><rect x="1402.64" y="547" width="1" height="104" fill="#2a2d32"/><rect x="1459.08" y="547" width="1" height="104" fill="#2a2d32"/><rect x="1515.52" y="547" width="1" height="104" fill="#2a2d32"/><rect x="1571.96" y="547" width="1" height="104" fill="#2a2d32"/><rect x="1628.40" y="547" width="1" height="104" fill="#2a2d32"/><rect x="1684.84" y="547" width="1" height="104" fill="#2a2d32"/><rect x="1741.28" y="547" width="1" height="104" fill="#2a2d32"/><rect x="1797.72" y="547" width="1" height="104" fill="#2a2d32"/><rect x="1854.16" y="547" width="1" height="104" fill="#2a2d32"/><rect x="1035.20" y="573.00" width="849.60" height="1" fill="#2a2d32"/><rect x="1035.20" y="609.90" width="849.60" height="1" fill="#2a2d32"/><rect x="1035.20" y="647.00" width="849.60" height="1" fill="#2a2d32"/><path d="M1039.20 637.60 L1064.50 637.60 L1092.72 637.60 L1120.94 637.60 L1149.16 637.60 L1177.38 637.60 L1205.60 637.60 L1233.82 637.60 L1262.04 637.60 L1290.26 637.60 L1318.48 637.60 L1346.70 637.60 L1374.92 637.60 L1403.14 637.60 L1431.36 637.60 L1459.58 637.60 L1487.80 637.60 L1516.02 637.60 L1544.24 637.60 L1572.46 637.60 L1600.68 637.60 L1628.90 637.60 L1657.12 637.60 L1685.34 637.60 L1713.56 637.60 L1741.78 637.60 L1770.00 637.60 L1798.22 637.60 L1826.44 637.60 L1854.66 637.60 L1882.88 637.60" fill="none" stroke="#73bf69" stroke-width="0.9"/><circle cx="1064.50" cy="637.60" r="2.1" fill="#73bf69"/><circle cx="1092.72" cy="637.60" r="2.1" fill="#73bf69"/><circle cx="1120.94" cy="637.60" r="2.1" fill="#73bf69"/><circle cx="1149.16" cy="637.60" r="2.1" fill="#73bf69"/><circle cx="1177.38" cy="637.60" r="2.1" fill="#73bf69"/><circle cx="1205.60" cy="637.60" r="2.1" fill="#73bf69"/><circle cx="1233.82" cy="637.60" r="2.1" fill="#73bf69"/><circle cx="1262.04" cy="637.60" r="2.1" fill="#73bf69"/><circle cx="1290.26" cy="637.60" r="2.1" fill="#73bf69"/><circle cx="1318.48" cy="637.60" r="2.1" fill="#73bf69"/><circle cx="1346.70" cy="637.60" r="2.1" fill="#73bf69"/><circle cx="1374.92" cy="637.60" r="2.1" fill="#73bf69"/><circle cx="1403.14" cy="637.60" r="2.1" fill="#73bf69"/><circle cx="1431.36" cy="637.60" r="2.1" fill="#73bf69"/><circle cx="1459.58" cy="637.60" r="2.1" fill="#73bf69"/><circle cx="1487.80" cy="637.60" r="2.1" fill="#73bf69"/><circle cx="1516.02" cy="637.60" r="2.1" fill="#73bf69"/><circle cx="1544.24" cy="637.60" r="2.1" fill="#73bf69"/><circle cx="1572.46" cy="637.60" r="2.1" fill="#73bf69"/><circle cx="1600.68" cy="637.60" r="2.1" fill="#73bf69"/><circle cx="1628.90" cy="637.60" r="2.1" fill="#73bf69"/><circle cx="1657.12" cy="637.60" r="2.1" fill="#73bf69"/><circle cx="1685.34" cy="637.60" r="2.1" fill="#73bf69"/><circle cx="1713.56" cy="637.60" r="2.1" fill="#73bf69"/><circle cx="1741.78" cy="637.60" r="2.1" fill="#73bf69"/><circle cx="1770.00" cy="637.60" r="2.1" fill="#73bf69"/><circle cx="1798.22" cy="637.60" r="2.1" fill="#73bf69"/><circle cx="1826.44" cy="637.60" r="2.1" fill="#73bf69"/><circle cx="1854.66" cy="637.60" r="2.1" fill="#73bf69"/><circle cx="1882.88" cy="637.60" r="2.1" fill="#73bf69"/><path d="M1039.20 557.30 L1064.50 557.30 L1092.72 557.30 L1120.94 557.30 L1149.16 557.30 L1177.38 557.30 L1205.60 557.30 L1233.82 557.30 L1262.04 557.30 L1290.26 557.30 L1318.48 557.30 L1346.70 557.30 L1374.92 557.30 L1403.14 557.30 L1431.36 557.30 L1459.58 557.30 L1487.80 557.30 L1516.02 557.30 L1544.24 557.30 L1572.46 557.30 L1600.68 557.30 L1628.90 557.30 L1657.12 557.30 L1685.34 557.30 L1713.56 557.30 L1741.78 557.30 L1770.00 557.30 L1798.22 557.30 L1826.44 557.30 L1854.66 557.30 L1882.88 557.30" fill="none" stroke="#f2cc0c" stroke-width="0.9"/><circle cx="1064.50" cy="557.30" r="2.1" fill="#f2cc0c"/><circle cx="1092.72" cy="557.30" r="2.1" fill="#f2cc0c"/><circle cx="1120.94" cy="557.30" r="2.1" fill="#f2cc0c"/><circle cx="1149.16" cy="557.30" r="2.1" fill="#f2cc0c"/><circle cx="1177.38" cy="557.30" r="2.1" fill="#f2cc0c"/><circle cx="1205.60" cy="557.30" r="2.1" fill="#f2cc0c"/><circle cx="1233.82" cy="557.30" r="2.1" fill="#f2cc0c"/><circle cx="1262.04" cy="557.30" r="2.1" fill="#f2cc0c"/><circle cx="1290.26" cy="557.30" r="2.1" fill="#f2cc0c"/><circle cx="1318.48" cy="557.30" r="2.1" fill="#f2cc0c"/><circle cx="1346.70" cy="557.30" r="2.1" fill="#f2cc0c"/><circle cx="1374.92" cy="557.30" r="2.1" fill="#f2cc0c"/><circle cx="1403.14" cy="557.30" r="2.1" fill="#f2cc0c"/><circle cx="1431.36" cy="557.30" r="2.1" fill="#f2cc0c"/><circle cx="1459.58" cy="557.30" r="2.1" fill="#f2cc0c"/><circle cx="1487.80" cy="557.30" r="2.1" fill="#f2cc0c"/><circle cx="1516.02" cy="557.30" r="2.1" fill="#f2cc0c"/><circle cx="1544.24" cy="557.30" r="2.1" fill="#f2cc0c"/><circle cx="1572.46" cy="557.30" r="2.1" fill="#f2cc0c"/><circle cx="1600.68" cy="557.30" r="2.1" fill="#f2cc0c"/><circle cx="1628.90" cy="557.30" r="2.1" fill="#f2cc0c"/><circle cx="1657.12" cy="557.30" r="2.1" fill="#f2cc0c"/><circle cx="1685.34" cy="557.30" r="2.1" fill="#f2cc0c"/><circle cx="1713.56" cy="557.30" r="2.1" fill="#f2cc0c"/><circle cx="1741.78" cy="557.30" r="2.1" fill="#f2cc0c"/><circle cx="1770.00" cy="557.30" r="2.1" fill="#f2cc0c"/><circle cx="1798.22" cy="557.30" r="2.1" fill="#f2cc0c"/><circle cx="1826.44" cy="557.30" r="2.1" fill="#f2cc0c"/><circle cx="1854.66" cy="557.30" r="2.1" fill="#f2cc0c"/><circle cx="1882.88" cy="557.30" r="2.1" fill="#f2cc0c"/></svg>
<div style="position:absolute;top:566.80px;height:14px;line-height:14px;font-size:10.2px;color:#ccccdc;white-space:nowrap;letter-spacing:-0.2px;right:877.00px;margin-right:0.2px;">47.1 GiB</div>
<div style="position:absolute;top:603.70px;height:14px;line-height:14px;font-size:10.2px;color:#ccccdc;white-space:nowrap;letter-spacing:-0.2px;right:877.00px;margin-right:0.2px;">47.0 GiB</div>
<div style="position:absolute;top:640.80px;height:14px;line-height:14px;font-size:10.2px;color:#ccccdc;white-space:nowrap;letter-spacing:-0.2px;right:877.00px;margin-right:0.2px;">46.9 GiB</div>
<div style="position:absolute;top:654.00px;height:14px;line-height:14px;font-size:10.2px;color:#ccccdc;white-space:nowrap;letter-spacing:-0.1px;left:764.20px;width:600px;text-align:center;">18:15:00</div>
<div style="position:absolute;top:654.00px;height:14px;line-height:14px;font-size:10.2px;color:#ccccdc;white-space:nowrap;letter-spacing:-0.1px;left:820.64px;width:600px;text-align:center;">18:16:00</div>
<div style="position:absolute;top:654.00px;height:14px;line-height:14px;font-size:10.2px;color:#ccccdc;white-space:nowrap;letter-spacing:-0.1px;left:877.08px;width:600px;text-align:center;">18:17:00</div>
<div style="position:absolute;top:654.00px;height:14px;line-height:14px;font-size:10.2px;color:#ccccdc;white-space:nowrap;letter-spacing:-0.1px;left:933.52px;width:600px;text-align:center;">18:18:00</div>
<div style="position:absolute;top:654.00px;height:14px;line-height:14px;font-size:10.2px;color:#ccccdc;white-space:nowrap;letter-spacing:-0.1px;left:989.96px;width:600px;text-align:center;">18:19:00</div>
<div style="position:absolute;top:654.00px;height:14px;line-height:14px;font-size:10.2px;color:#ccccdc;white-space:nowrap;letter-spacing:-0.1px;left:1046.40px;width:600px;text-align:center;">18:20:00</div>
<div style="position:absolute;top:654.00px;height:14px;line-height:14px;font-size:10.2px;color:#ccccdc;white-space:nowrap;letter-spacing:-0.1px;left:1102.84px;width:600px;text-align:center;">18:21:00</div>
<div style="position:absolute;top:654.00px;height:14px;line-height:14px;font-size:10.2px;color:#ccccdc;white-space:nowrap;letter-spacing:-0.1px;left:1159.28px;width:600px;text-align:center;">18:22:00</div>
<div style="position:absolute;top:654.00px;height:14px;line-height:14px;font-size:10.2px;color:#ccccdc;white-space:nowrap;letter-spacing:-0.1px;left:1215.72px;width:600px;text-align:center;">18:23:00</div>
<div style="position:absolute;top:654.00px;height:14px;line-height:14px;font-size:10.2px;color:#ccccdc;white-space:nowrap;letter-spacing:-0.1px;left:1272.16px;width:600px;text-align:center;">18:24:00</div>
<div style="position:absolute;top:654.00px;height:14px;line-height:14px;font-size:10.2px;color:#ccccdc;white-space:nowrap;letter-spacing:-0.1px;left:1328.60px;width:600px;text-align:center;">18:25:00</div>
<div style="position:absolute;top:654.00px;height:14px;line-height:14px;font-size:10.2px;color:#ccccdc;white-space:nowrap;letter-spacing:-0.1px;left:1385.04px;width:600px;text-align:center;">18:26:00</div>
<div style="position:absolute;top:654.00px;height:14px;line-height:14px;font-size:10.2px;color:#ccccdc;white-space:nowrap;letter-spacing:-0.1px;left:1441.48px;width:600px;text-align:center;">18:27:00</div>
<div style="position:absolute;top:654.00px;height:14px;line-height:14px;font-size:10.2px;color:#ccccdc;white-space:nowrap;letter-spacing:-0.1px;left:1497.92px;width:600px;text-align:center;">18:28:00</div>
<div style="position:absolute;top:654.00px;height:14px;line-height:14px;font-size:10.2px;color:#ccccdc;white-space:nowrap;letter-spacing:-0.1px;left:1554.36px;width:600px;text-align:center;">18:29:00</div>
<div style="position:absolute;left:1005.30px;top:675.10px;width:12.00px;height:3.40px;background:#73bf69;border-radius:1px"></div>
<div style="position:absolute;top:670.10px;height:14px;line-height:14px;font-size:10.2px;color:#ccccdc;white-space:nowrap;left:1024.10px;">10.128.15.15:9100</div>
<div style="position:absolute;left:1118.30px;top:675.10px;width:12.00px;height:3.40px;background:#f2cc0c;border-radius:1px"></div>
<div style="position:absolute;top:670.10px;height:14px;line-height:14px;font-size:10.2px;color:#ccccdc;white-space:nowrap;left:1137.10px;">10.128.15.16:9100</div>
<div class="panel" style="left:63px;top:698px;width:607px;height:300px"></div>
<div style="position:absolute;top:703.70px;height:17px;line-height:17px;font-size:11.9px;color:#ccccdc;white-space:nowrap;font-weight:700;-webkit-text-stroke:0;letter-spacing:-0.25px;left:66.50px;width:600px;text-align:center;">CPU Usage</div>
<div class="panel" style="left:677px;top:698px;width:608px;height:300px"></div>
<div style="position:absolute;top:703.70px;height:17px;line-height:17px;font-size:11.9px;color:#ccccdc;white-space:nowrap;font-weight:700;-webkit-text-stroke:0;letter-spacing:-0.25px;left:681.00px;width:600px;text-align:center;">CPU Usage by Container</div>
<div class="panel" style="left:1292px;top:698px;width:607px;height:300px"></div>
<div style="position:absolute;top:703.70px;height:17px;line-height:17px;font-size:11.9px;color:#ccccdc;white-space:nowrap;font-weight:700;-webkit-text-stroke:0;letter-spacing:-0.25px;left:1295.50px;width:600px;text-align:center;">CPU Usage by Mode</div>
<svg style="left:0;top:0" width="1907" height="962" viewBox="0 0 1907 962"><rect x="103.2" y="934.60" width="546.4" height="1" fill="#393b3f"/><rect x="103.2" y="895.80" width="546.4" height="1" fill="#393b3f"/><rect x="103.2" y="857.00" width="546.4" height="1" fill="#393b3f"/><rect x="103.2" y="818.20" width="546.4" height="1" fill="#393b3f"/><rect x="103.2" y="779.40" width="546.4" height="1" fill="#393b3f"/><rect x="103.2" y="740.60" width="546.4" height="1" fill="#393b3f"/><rect x="156.00" y="741.1" width="1" height="194.5" fill="#393b3f"/><rect x="229.00" y="741.1" width="1" height="194.5" fill="#393b3f"/><rect x="302.00" y="741.1" width="1" height="194.5" fill="#393b3f"/><rect x="375.00" y="741.1" width="1" height="194.5" fill="#393b3f"/><rect x="448.00" y="741.1" width="1" height="194.5" fill="#393b3f"/><rect x="521.00" y="741.1" width="1" height="194.5" fill="#393b3f"/><rect x="594.00" y="741.1" width="1" height="194.5" fill="#393b3f"/><path d="M103.20 922.68 L112.31 922.53 L121.41 922.45 L130.52 922.46 L139.63 922.52 L148.73 922.58 L157.84 922.62 L166.95 922.61 L176.05 922.56 L185.16 922.50 L194.27 922.46 L203.37 922.48 L212.48 922.58 L221.59 922.77 L230.69 923.00 L239.80 923.25 L248.91 923.44 L258.01 923.54 L267.12 923.55 L276.23 923.45 L285.33 923.30 L294.44 923.13 L303.55 922.99 L312.65 922.91 L321.76 922.88 L330.87 922.89 L339.97 922.90 L349.08 922.87 L358.19 922.79 L367.29 922.64 L376.40 922.47 L385.51 922.31 L394.61 922.21 L403.72 922.20 L412.83 922.30 L421.93 922.48 L431.04 922.72 L440.15 922.96 L449.25 923.14 L458.36 923.25 L467.47 923.27 L476.57 923.24 L485.68 923.18 L494.79 923.13 L503.89 923.13 L513.00 923.18 L522.11 923.25 L531.21 923.32 L540.32 923.33 L549.43 923.26 L558.53 923.11 L567.64 922.88 L576.75 922.63 L585.85 922.41 L594.96 922.26 L604.07 922.21 L613.17 922.68 L622.28 922.20 L631.39 921.71 L640.49 921.33 L649.60 920.94 L649.6 935.1 L103.2 935.1 Z" fill="#7eb26d" fill-opacity="0.1"/><path d="M103.20 932.05 L112.31 932.08 L121.41 932.12 L130.52 932.17 L139.63 932.22 L148.73 932.27 L157.84 932.31 L166.95 932.33 L176.05 932.35 L185.16 932.34 L194.27 932.32 L203.37 932.28 L212.48 932.23 L221.59 932.18 L230.69 932.13 L239.80 932.09 L248.91 932.06 L258.01 932.04 L267.12 932.04 L276.23 932.05 L285.33 932.08 L294.44 932.13 L303.55 932.18 L312.65 932.23 L321.76 932.27 L330.87 932.31 L339.97 932.34 L349.08 932.35 L358.19 932.34 L367.29 932.31 L376.40 932.27 L385.51 932.23 L394.61 932.17 L403.72 932.12 L412.83 932.08 L421.93 932.05 L431.04 932.04 L440.15 932.04 L449.25 932.06 L458.36 932.09 L467.47 932.13 L476.57 932.18 L485.68 932.23 L494.79 932.28 L503.89 932.32 L513.00 932.34 L522.11 932.34 L531.21 932.33 L540.32 932.31 L549.43 932.27 L558.53 932.22 L567.64 932.17 L576.75 932.12 L585.85 932.08 L594.96 932.05 L604.07 932.04 L613.17 932.04 L622.28 932.06 L631.39 932.10 L640.49 932.14 L649.60 932.19 L649.6 935.1 L103.2 935.1 Z" fill="#eab839" fill-opacity="0.1"/><path d="M103.20 922.68 L112.31 922.53 L121.41 922.45 L130.52 922.46 L139.63 922.52 L148.73 922.58 L157.84 922.62 L166.95 922.61 L176.05 922.56 L185.16 922.50 L194.27 922.46 L203.37 922.48 L212.48 922.58 L221.59 922.77 L230.69 923.00 L239.80 923.25 L248.91 923.44 L258.01 923.54 L267.12 923.55 L276.23 923.45 L285.33 923.30 L294.44 923.13 L303.55 922.99 L312.65 922.91 L321.76 922.88 L330.87 922.89 L339.97 922.90 L349.08 922.87 L358.19 922.79 L367.29 922.64 L376.40 922.47 L385.51 922.31 L394.61 922.21 L403.72 922.20 L412.83 922.30 L421.93 922.48 L431.04 922.72 L440.15 922.96 L449.25 923.14 L458.36 923.25 L467.47 923.27 L476.57 923.24 L485.68 923.18 L494.79 923.13 L503.89 923.13 L513.00 923.18 L522.11 923.25 L531.21 923.32 L540.32 923.33 L549.43 923.26 L558.53 923.11 L567.64 922.88 L576.75 922.63 L585.85 922.41 L594.96 922.26 L604.07 922.21 L613.17 922.68 L622.28 922.20 L631.39 921.71 L640.49 921.33 L649.60 920.94" fill="none" stroke="#5f8a56" stroke-width="1"/><path d="M103.20 932.05 L112.31 932.08 L121.41 932.12 L130.52 932.17 L139.63 932.22 L148.73 932.27 L157.84 932.31 L166.95 932.33 L176.05 932.35 L185.16 932.34 L194.27 932.32 L203.37 932.28 L212.48 932.23 L221.59 932.18 L230.69 932.13 L239.80 932.09 L248.91 932.06 L258.01 932.04 L267.12 932.04 L276.23 932.05 L285.33 932.08 L294.44 932.13 L303.55 932.18 L312.65 932.23 L321.76 932.27 L330.87 932.31 L339.97 932.34 L349.08 932.35 L358.19 932.34 L367.29 932.31 L376.40 932.27 L385.51 932.23 L394.61 932.17 L403.72 932.12 L412.83 932.08 L421.93 932.05 L431.04 932.04 L440.15 932.04 L449.25 932.06 L458.36 932.09 L467.47 932.13 L476.57 932.18 L485.68 932.23 L494.79 932.28 L503.89 932.32 L513.00 932.34 L522.11 932.34 L531.21 932.33 L540.32 932.31 L549.43 932.27 L558.53 932.22 L567.64 932.17 L576.75 932.12 L585.85 932.08 L594.96 932.05 L604.07 932.04 L613.17 932.04 L622.28 932.06 L631.39 932.10 L640.49 932.14 L649.60 932.19" fill="none" stroke="#c79d36" stroke-width="1"/></svg>
<div style="position:absolute;top:928.50px;height:14px;line-height:14px;font-size:10.2px;color:#ccccdc;white-space:nowrap;letter-spacing:-0.1px;right:1808.70px;margin-right:0.1px;">0%</div>
<div style="position:absolute;top:889.70px;height:14px;line-height:14px;font-size:10.2px;color:#ccccdc;white-space:nowrap;letter-spacing:-0.1px;right:1808.70px;margin-right:0.1px;">20%</div>
<div style="position:absolute;top:850.90px;height:14px;line-height:14px;font-size:10.2px;color:#ccccdc;white-space:nowrap;letter-spacing:-0.1px;right:1808.70px;margin-right:0.1px;">40%</div>
<div style="position:absolute;top:812.10px;height:14px;line-height:14px;font-size:10.2px;color:#ccccdc;white-space:nowrap;letter-spacing:-0.1px;right:1808.70px;margin-right:0.1px;">60.0%</div>
<div style="position:absolute;top:773.30px;height:14px;line-height:14px;font-size:10.2px;color:#ccccdc;white-space:nowrap;letter-spacing:-0.1px;right:1808.70px;margin-right:0.1px;">80%</div>
<div style="position:absolute;top:734.50px;height:14px;line-height:14px;font-size:10.2px;color:#ccccdc;white-space:nowrap;letter-spacing:-0.1px;right:1808.70px;margin-right:0.1px;">100%</div>
<div style="position:absolute;top:940.10px;height:14px;line-height:14px;font-size:10.2px;color:#ccccdc;white-space:nowrap;left:-143.50px;width:600px;text-align:center;">18:16</div>
<div style="position:absolute;top:940.10px;height:14px;line-height:14px;font-size:10.2px;color:#ccccdc;white-space:nowrap;left:-70.50px;width:600px;text-align:center;">18:18</div>
<div style="position:absolute;top:940.10px;height:14px;line-height:14px;font-size:10.2px;color:#ccccdc;white-space:nowrap;left:2.50px;width:600px;text-align:center;">18:20</div>
<div style="position:absolute;top:940.10px;height:14px;line-height:14px;font-size:10.2px;color:#ccccdc;white-space:nowrap;left:75.50px;width:600px;text-align:center;">18:22</div>
<div style="position:absolute;top:940.10px;height:14px;line-height:14px;font-size:10.2px;color:#ccccdc;white-space:nowrap;left:148.50px;width:600px;text-align:center;">18:24</div>
<div style="position:absolute;top:940.10px;height:14px;line-height:14px;font-size:10.2px;color:#ccccdc;white-space:nowrap;left:221.50px;width:600px;text-align:center;">18:26</div>
<div style="position:absolute;top:940.10px;height:14px;line-height:14px;font-size:10.2px;color:#ccccdc;white-space:nowrap;left:294.50px;width:600px;text-align:center;">18:28</div>
<svg style="left:0;top:0" width="1907" height="962" viewBox="0 0 1907 962"><rect x="718.2" y="919.10" width="546.10" height="1" fill="#393b3f"/><rect x="718.2" y="882.90" width="546.10" height="1" fill="#393b3f"/><rect x="718.2" y="847.20" width="546.10" height="1" fill="#393b3f"/><rect x="718.2" y="811.90" width="546.10" height="1" fill="#393b3f"/><rect x="718.2" y="776.20" width="546.10" height="1" fill="#393b3f"/><rect x="718.2" y="740.50" width="546.10" height="1" fill="#393b3f"/><rect x="771.10" y="741" width="1" height="179.10" fill="#393b3f"/><rect x="843.94" y="741" width="1" height="179.10" fill="#393b3f"/><rect x="916.78" y="741" width="1" height="179.10" fill="#393b3f"/><rect x="989.62" y="741" width="1" height="179.10" fill="#393b3f"/><rect x="1062.46" y="741" width="1" height="179.10" fill="#393b3f"/><rect x="1135.30" y="741" width="1" height="179.10" fill="#393b3f"/><rect x="1208.14" y="741" width="1" height="179.10" fill="#393b3f"/><rect x="718.20" y="912.99" width="10.70" height="6.61" fill="#7eb26d"/><rect x="718.20" y="901.57" width="10.70" height="11.41" fill="#eab839"/><rect x="718.20" y="894.67" width="10.70" height="6.90" fill="#6ed0e0"/><rect x="718.20" y="887.23" width="10.70" height="7.44" fill="#ef843c"/><rect x="718.20" y="884.22" width="10.70" height="3.01" fill="#e24d42"/><rect x="718.20" y="848.00" width="10.70" height="36.23" fill="#1f78c1"/><rect x="718.20" y="820.05" width="10.70" height="27.94" fill="#ba43a9"/><rect x="718.20" y="806.19" width="10.70" height="13.87" fill="#705da0"/><rect x="718.20" y="794.83" width="10.70" height="11.36" fill="#508642"/><rect x="718.20" y="787.42" width="10.70" height="7.41" fill="#d0a626"/><rect x="735.18" y="913.06" width="11.93" height="6.54" fill="#7eb26d"/><rect x="735.18" y="901.67" width="11.93" height="11.39" fill="#eab839"/><rect x="735.18" y="894.83" width="11.93" height="6.84" fill="#6ed0e0"/><rect x="735.18" y="887.16" width="11.93" height="7.67" fill="#ef843c"/><rect x="735.18" y="884.20" width="11.93" height="2.96" fill="#e24d42"/><rect x="735.18" y="848.47" width="11.93" height="35.74" fill="#1f78c1"/><rect x="735.18" y="820.25" width="11.93" height="28.22" fill="#ba43a9"/><rect x="735.18" y="806.14" width="11.93" height="14.11" fill="#705da0"/><rect x="735.18" y="794.53" width="11.93" height="11.61" fill="#508642"/><rect x="735.18" y="787.13" width="11.93" height="7.40" fill="#d0a626"/><rect x="753.39" y="912.81" width="11.93" height="6.79" fill="#7eb26d"/><rect x="753.39" y="901.45" width="11.93" height="11.36" fill="#eab839"/><rect x="753.39" y="894.49" width="11.93" height="6.96" fill="#6ed0e0"/><rect x="753.39" y="886.98" width="11.93" height="7.51" fill="#ef843c"/><rect x="753.39" y="884.02" width="11.93" height="2.96" fill="#e24d42"/><rect x="753.39" y="848.20" width="11.93" height="35.82" fill="#1f78c1"/><rect x="753.39" y="820.05" width="11.93" height="28.15" fill="#ba43a9"/><rect x="753.39" y="806.01" width="11.93" height="14.04" fill="#705da0"/><rect x="753.39" y="794.59" width="11.93" height="11.43" fill="#508642"/><rect x="753.39" y="787.13" width="11.93" height="7.46" fill="#d0a626"/><rect x="771.60" y="912.90" width="11.93" height="6.70" fill="#7eb26d"/><rect x="771.60" y="901.39" width="11.93" height="11.52" fill="#eab839"/><rect x="771.60" y="894.52" width="11.93" height="6.87" fill="#6ed0e0"/><rect x="771.60" y="887.07" width="11.93" height="7.44" fill="#ef843c"/><rect x="771.60" y="884.13" width="11.93" height="2.95" fill="#e24d42"/><rect x="771.60" y="849.53" width="11.93" height="34.60" fill="#1f78c1"/><rect x="771.60" y="822.61" width="11.93" height="26.92" fill="#ba43a9"/><rect x="771.60" y="808.79" width="11.93" height="13.82" fill="#705da0"/><rect x="771.60" y="797.30" width="11.93" height="11.49" fill="#508642"/><rect x="771.60" y="789.85" width="11.93" height="7.46" fill="#d0a626"/><rect x="789.81" y="912.95" width="11.93" height="6.65" fill="#7eb26d"/><rect x="789.81" y="901.47" width="11.93" height="11.48" fill="#eab839"/><rect x="789.81" y="894.53" width="11.93" height="6.94" fill="#6ed0e0"/><rect x="789.81" y="886.90" width="11.93" height="7.63" fill="#ef843c"/><rect x="789.81" y="883.93" width="11.93" height="2.97" fill="#e24d42"/><rect x="789.81" y="849.34" width="11.93" height="34.59" fill="#1f78c1"/><rect x="789.81" y="823.25" width="11.93" height="26.09" fill="#ba43a9"/><rect x="789.81" y="809.18" width="11.93" height="14.07" fill="#705da0"/><rect x="789.81" y="797.50" width="11.93" height="11.68" fill="#508642"/><rect x="789.81" y="790.13" width="11.93" height="7.37" fill="#d0a626"/><rect x="808.02" y="912.81" width="11.93" height="6.79" fill="#7eb26d"/><rect x="808.02" y="901.41" width="11.93" height="11.40" fill="#eab839"/><rect x="808.02" y="894.58" width="11.93" height="6.84" fill="#6ed0e0"/><rect x="808.02" y="886.93" width="11.93" height="7.65" fill="#ef843c"/><rect x="808.02" y="883.97" width="11.93" height="2.96" fill="#e24d42"/><rect x="808.02" y="849.18" width="11.93" height="34.79" fill="#1f78c1"/><rect x="808.02" y="823.24" width="11.93" height="25.94" fill="#ba43a9"/><rect x="808.02" y="809.28" width="11.93" height="13.95" fill="#705da0"/><rect x="808.02" y="797.59" width="11.93" height="11.70" fill="#508642"/><rect x="808.02" y="790.13" width="11.93" height="7.45" fill="#d0a626"/><rect x="826.23" y="912.84" width="11.93" height="6.76" fill="#7eb26d"/><rect x="826.23" y="901.35" width="11.93" height="11.49" fill="#eab839"/><rect x="826.23" y="894.44" width="11.93" height="6.91" fill="#6ed0e0"/><rect x="826.23" y="886.84" width="11.93" height="7.60" fill="#ef843c"/><rect x="826.23" y="883.83" width="11.93" height="3.01" fill="#e24d42"/><rect x="826.23" y="848.65" width="11.93" height="35.18" fill="#1f78c1"/><rect x="826.23" y="821.28" width="11.93" height="27.36" fill="#ba43a9"/><rect x="826.23" y="807.17" width="11.93" height="14.11" fill="#705da0"/><rect x="826.23" y="795.61" width="11.93" height="11.56" fill="#508642"/><rect x="826.23" y="788.13" width="11.93" height="7.48" fill="#d0a626"/><rect x="844.44" y="913.06" width="11.93" height="6.54" fill="#7eb26d"/><rect x="844.44" y="901.39" width="11.93" height="11.67" fill="#eab839"/><rect x="844.44" y="894.49" width="11.93" height="6.90" fill="#6ed0e0"/><rect x="844.44" y="886.77" width="11.93" height="7.72" fill="#ef843c"/><rect x="844.44" y="883.73" width="11.93" height="3.04" fill="#e24d42"/><rect x="844.44" y="848.76" width="11.93" height="34.97" fill="#1f78c1"/><rect x="844.44" y="821.86" width="11.93" height="26.90" fill="#ba43a9"/><rect x="844.44" y="807.91" width="11.93" height="13.95" fill="#705da0"/><rect x="844.44" y="796.55" width="11.93" height="11.35" fill="#508642"/><rect x="844.44" y="789.13" width="11.93" height="7.42" fill="#d0a626"/><rect x="862.65" y="913.03" width="11.93" height="6.57" fill="#7eb26d"/><rect x="862.65" y="901.63" width="11.93" height="11.40" fill="#eab839"/><rect x="862.65" y="894.89" width="11.93" height="6.74" fill="#6ed0e0"/><rect x="862.65" y="887.24" width="11.93" height="7.65" fill="#ef843c"/><rect x="862.65" y="884.28" width="11.93" height="2.96" fill="#e24d42"/><rect x="862.65" y="849.03" width="11.93" height="35.25" fill="#1f78c1"/><rect x="862.65" y="821.71" width="11.93" height="27.32" fill="#ba43a9"/><rect x="862.65" y="807.64" width="11.93" height="14.07" fill="#705da0"/><rect x="862.65" y="796.26" width="11.93" height="11.38" fill="#508642"/><rect x="862.65" y="788.85" width="11.93" height="7.42" fill="#d0a626"/><rect x="880.86" y="912.93" width="11.93" height="6.67" fill="#7eb26d"/><rect x="880.86" y="901.18" width="11.93" height="11.75" fill="#eab839"/><rect x="880.86" y="894.23" width="11.93" height="6.95" fill="#6ed0e0"/><rect x="880.86" y="886.54" width="11.93" height="7.68" fill="#ef843c"/><rect x="880.86" y="883.57" width="11.93" height="2.97" fill="#e24d42"/><rect x="880.86" y="848.64" width="11.93" height="34.93" fill="#1f78c1"/><rect x="880.86" y="822.03" width="11.93" height="26.60" fill="#ba43a9"/><rect x="880.86" y="807.96" width="11.93" height="14.07" fill="#705da0"/><rect x="880.86" y="796.17" width="11.93" height="11.79" fill="#508642"/><rect x="880.86" y="788.85" width="11.93" height="7.33" fill="#d0a626"/><rect x="899.07" y="913.03" width="11.93" height="6.57" fill="#7eb26d"/><rect x="899.07" y="901.58" width="11.93" height="11.45" fill="#eab839"/><rect x="899.07" y="894.79" width="11.93" height="6.79" fill="#6ed0e0"/><rect x="899.07" y="887.22" width="11.93" height="7.57" fill="#ef843c"/><rect x="899.07" y="884.21" width="11.93" height="3.01" fill="#e24d42"/><rect x="899.07" y="849.33" width="11.93" height="34.88" fill="#1f78c1"/><rect x="899.07" y="822.91" width="11.93" height="26.42" fill="#ba43a9"/><rect x="899.07" y="809.10" width="11.93" height="13.82" fill="#705da0"/><rect x="899.07" y="797.58" width="11.93" height="11.51" fill="#508642"/><rect x="899.07" y="790.13" width="11.93" height="7.45" fill="#d0a626"/><rect x="917.28" y="912.82" width="11.93" height="6.78" fill="#7eb26d"/><rect x="917.28" y="901.16" width="11.93" height="11.66" fill="#eab839"/><rect x="917.28" y="894.29" width="11.93" height="6.86" fill="#6ed0e0"/><rect x="917.28" y="886.68" width="11.93" height="7.61" fill="#ef843c"/><rect x="917.28" y="883.66" width="11.93" height="3.02" fill="#e24d42"/><rect x="917.28" y="849.41" width="11.93" height="34.25" fill="#1f78c1"/><rect x="917.28" y="822.42" width="11.93" height="27.00" fill="#ba43a9"/><rect x="917.28" y="808.40" width="11.93" height="14.02" fill="#705da0"/><rect x="917.28" y="796.65" width="11.93" height="11.75" fill="#508642"/><rect x="917.28" y="789.13" width="11.93" height="7.52" fill="#d0a626"/><rect x="935.49" y="912.97" width="11.93" height="6.63" fill="#7eb26d"/><rect x="935.49" y="901.44" width="11.93" height="11.53" fill="#eab839"/><rect x="935.49" y="894.69" width="11.93" height="6.75" fill="#6ed0e0"/><rect x="935.49" y="887.08" width="11.93" height="7.61" fill="#ef843c"/><rect x="935.49" y="884.13" width="11.93" height="2.95" fill="#e24d42"/><rect x="935.49" y="849.40" width="11.93" height="34.73" fill="#1f78c1"/><rect x="935.49" y="822.61" width="11.93" height="26.80" fill="#ba43a9"/><rect x="935.49" y="808.93" width="11.93" height="13.67" fill="#705da0"/><rect x="935.49" y="797.43" width="11.93" height="11.50" fill="#508642"/><rect x="935.49" y="790.13" width="11.93" height="7.30" fill="#d0a626"/><rect x="953.70" y="913.07" width="11.93" height="6.53" fill="#7eb26d"/><rect x="953.70" y="901.66" width="11.93" height="11.41" fill="#eab839"/><rect x="953.70" y="894.91" width="11.93" height="6.75" fill="#6ed0e0"/><rect x="953.70" y="887.38" width="11.93" height="7.53" fill="#ef843c"/><rect x="953.70" y="884.43" width="11.93" height="2.94" fill="#e24d42"/><rect x="953.70" y="849.15" width="11.93" height="35.28" fill="#1f78c1"/><rect x="953.70" y="822.64" width="11.93" height="26.51" fill="#ba43a9"/><rect x="953.70" y="808.98" width="11.93" height="13.67" fill="#705da0"/><rect x="953.70" y="797.52" width="11.93" height="11.46" fill="#508642"/><rect x="953.70" y="790.13" width="11.93" height="7.39" fill="#d0a626"/><rect x="971.91" y="912.98" width="11.93" height="6.62" fill="#7eb26d"/><rect x="971.91" y="901.58" width="11.93" height="11.40" fill="#eab839"/><rect x="971.91" y="894.62" width="11.93" height="6.95" fill="#6ed0e0"/><rect x="971.91" y="886.90" width="11.93" height="7.72" fill="#ef843c"/><rect x="971.91" y="883.90" width="11.93" height="3.00" fill="#e24d42"/><rect x="971.91" y="848.90" width="11.93" height="35.00" fill="#1f78c1"/><rect x="971.91" y="822.64" width="11.93" height="26.27" fill="#ba43a9"/><rect x="971.91" y="809.00" width="11.93" height="13.64" fill="#705da0"/><rect x="971.91" y="797.49" width="11.93" height="11.50" fill="#508642"/><rect x="971.91" y="790.13" width="11.93" height="7.36" fill="#d0a626"/><rect x="990.12" y="912.85" width="11.93" height="6.75" fill="#7eb26d"/><rect x="990.12" y="901.44" width="11.93" height="11.42" fill="#eab839"/><rect x="990.12" y="894.71" width="11.93" height="6.73" fill="#6ed0e0"/><rect x="990.12" y="887.00" width="11.93" height="7.71" fill="#ef843c"/><rect x="990.12" y="883.99" width="11.93" height="3.00" fill="#e24d42"/><rect x="990.12" y="850.01" width="11.93" height="33.98" fill="#1f78c1"/><rect x="990.12" y="823.89" width="11.93" height="26.12" fill="#ba43a9"/><rect x="990.12" y="810.29" width="11.93" height="13.60" fill="#705da0"/><rect x="990.12" y="798.71" width="11.93" height="11.59" fill="#508642"/><rect x="990.12" y="791.13" width="11.93" height="7.57" fill="#d0a626"/><rect x="1008.33" y="912.84" width="11.93" height="6.76" fill="#7eb26d"/><rect x="1008.33" y="901.18" width="11.93" height="11.67" fill="#eab839"/><rect x="1008.33" y="894.38" width="11.93" height="6.79" fill="#6ed0e0"/><rect x="1008.33" y="886.85" width="11.93" height="7.53" fill="#ef843c"/><rect x="1008.33" y="883.89" width="11.93" height="2.96" fill="#e24d42"/><rect x="1008.33" y="848.28" width="11.93" height="35.61" fill="#1f78c1"/><rect x="1008.33" y="821.28" width="11.93" height="27.00" fill="#ba43a9"/><rect x="1008.33" y="807.26" width="11.93" height="14.02" fill="#705da0"/><rect x="1008.33" y="795.77" width="11.93" height="11.50" fill="#508642"/><rect x="1008.33" y="788.42" width="11.93" height="7.35" fill="#d0a626"/><rect x="1026.54" y="912.86" width="11.93" height="6.74" fill="#7eb26d"/><rect x="1026.54" y="901.06" width="11.93" height="11.80" fill="#eab839"/><rect x="1026.54" y="894.10" width="11.93" height="6.96" fill="#6ed0e0"/><rect x="1026.54" y="886.44" width="11.93" height="7.67" fill="#ef843c"/><rect x="1026.54" y="883.40" width="11.93" height="3.04" fill="#e24d42"/><rect x="1026.54" y="848.57" width="11.93" height="34.83" fill="#1f78c1"/><rect x="1026.54" y="822.80" width="11.93" height="25.76" fill="#ba43a9"/><rect x="1026.54" y="808.93" width="11.93" height="13.87" fill="#705da0"/><rect x="1026.54" y="797.42" width="11.93" height="11.51" fill="#508642"/><rect x="1026.54" y="790.13" width="11.93" height="7.29" fill="#d0a626"/><rect x="1044.75" y="913.07" width="11.93" height="6.53" fill="#7eb26d"/><rect x="1044.75" y="901.59" width="11.93" height="11.47" fill="#eab839"/><rect x="1044.75" y="894.80" width="11.93" height="6.79" fill="#6ed0e0"/><rect x="1044.75" y="887.17" width="11.93" height="7.63" fill="#ef843c"/><rect x="1044.75" y="884.11" width="11.93" height="3.06" fill="#e24d42"/><rect x="1044.75" y="850.09" width="11.93" height="34.02" fill="#1f78c1"/><rect x="1044.75" y="824.01" width="11.93" height="26.08" fill="#ba43a9"/><rect x="1044.75" y="809.88" width="11.93" height="14.13" fill="#705da0"/><rect x="1044.75" y="798.09" width="11.93" height="11.79" fill="#508642"/><rect x="1044.75" y="790.70" width="11.93" height="7.39" fill="#d0a626"/><rect x="1062.96" y="913.02" width="11.93" height="6.58" fill="#7eb26d"/><rect x="1062.96" y="901.57" width="11.93" height="11.45" fill="#eab839"/><rect x="1062.96" y="894.79" width="11.93" height="6.78" fill="#6ed0e0"/><rect x="1062.96" y="887.31" width="11.93" height="7.48" fill="#ef843c"/><rect x="1062.96" y="884.29" width="11.93" height="3.02" fill="#e24d42"/><rect x="1062.96" y="849.26" width="11.93" height="35.03" fill="#1f78c1"/><rect x="1062.96" y="822.86" width="11.93" height="26.40" fill="#ba43a9"/><rect x="1062.96" y="809.01" width="11.93" height="13.85" fill="#705da0"/><rect x="1062.96" y="797.37" width="11.93" height="11.65" fill="#508642"/><rect x="1062.96" y="789.85" width="11.93" height="7.52" fill="#d0a626"/><rect x="1081.17" y="913.05" width="11.93" height="6.55" fill="#7eb26d"/><rect x="1081.17" y="901.40" width="11.93" height="11.65" fill="#eab839"/><rect x="1081.17" y="894.43" width="11.93" height="6.97" fill="#6ed0e0"/><rect x="1081.17" y="886.77" width="11.93" height="7.66" fill="#ef843c"/><rect x="1081.17" y="883.74" width="11.93" height="3.03" fill="#e24d42"/><rect x="1081.17" y="848.65" width="11.93" height="35.09" fill="#1f78c1"/><rect x="1081.17" y="822.17" width="11.93" height="26.48" fill="#ba43a9"/><rect x="1081.17" y="808.15" width="11.93" height="14.02" fill="#705da0"/><rect x="1081.17" y="796.65" width="11.93" height="11.50" fill="#508642"/><rect x="1081.17" y="789.13" width="11.93" height="7.52" fill="#d0a626"/><rect x="1099.38" y="912.82" width="11.93" height="6.78" fill="#7eb26d"/><rect x="1099.38" y="901.29" width="11.93" height="11.53" fill="#eab839"/><rect x="1099.38" y="894.46" width="11.93" height="6.83" fill="#6ed0e0"/><rect x="1099.38" y="886.75" width="11.93" height="7.71" fill="#ef843c"/><rect x="1099.38" y="883.72" width="11.93" height="3.03" fill="#e24d42"/><rect x="1099.38" y="849.53" width="11.93" height="34.19" fill="#1f78c1"/><rect x="1099.38" y="823.66" width="11.93" height="25.87" fill="#ba43a9"/><rect x="1099.38" y="809.99" width="11.93" height="13.67" fill="#705da0"/><rect x="1099.38" y="798.23" width="11.93" height="11.76" fill="#508642"/><rect x="1099.38" y="790.70" width="11.93" height="7.52" fill="#d0a626"/><rect x="1117.59" y="913.04" width="11.93" height="6.56" fill="#7eb26d"/><rect x="1117.59" y="901.31" width="11.93" height="11.73" fill="#eab839"/><rect x="1117.59" y="894.32" width="11.93" height="6.99" fill="#6ed0e0"/><rect x="1117.59" y="886.70" width="11.93" height="7.62" fill="#ef843c"/><rect x="1117.59" y="883.71" width="11.93" height="2.98" fill="#e24d42"/><rect x="1117.59" y="848.93" width="11.93" height="34.78" fill="#1f78c1"/><rect x="1117.59" y="822.99" width="11.93" height="25.94" fill="#ba43a9"/><rect x="1117.59" y="809.40" width="11.93" height="13.59" fill="#705da0"/><rect x="1117.59" y="797.61" width="11.93" height="11.79" fill="#508642"/><rect x="1117.59" y="790.13" width="11.93" height="7.48" fill="#d0a626"/><rect x="1135.80" y="912.93" width="11.93" height="6.67" fill="#7eb26d"/><rect x="1135.80" y="901.16" width="11.93" height="11.78" fill="#eab839"/><rect x="1135.80" y="894.32" width="11.93" height="6.84" fill="#6ed0e0"/><rect x="1135.80" y="886.63" width="11.93" height="7.69" fill="#ef843c"/><rect x="1135.80" y="883.59" width="11.93" height="3.04" fill="#e24d42"/><rect x="1135.80" y="849.80" width="11.93" height="33.79" fill="#1f78c1"/><rect x="1135.80" y="824.36" width="11.93" height="25.44" fill="#ba43a9"/><rect x="1135.80" y="810.62" width="11.93" height="13.75" fill="#705da0"/><rect x="1135.80" y="799.16" width="11.93" height="11.45" fill="#508642"/><rect x="1135.80" y="791.70" width="11.93" height="7.46" fill="#d0a626"/><rect x="1154.01" y="913.00" width="11.93" height="6.60" fill="#7eb26d"/><rect x="1154.01" y="901.47" width="11.93" height="11.54" fill="#eab839"/><rect x="1154.01" y="894.71" width="11.93" height="6.76" fill="#6ed0e0"/><rect x="1154.01" y="887.01" width="11.93" height="7.70" fill="#ef843c"/><rect x="1154.01" y="884.03" width="11.93" height="2.98" fill="#e24d42"/><rect x="1154.01" y="849.80" width="11.93" height="34.23" fill="#1f78c1"/><rect x="1154.01" y="823.88" width="11.93" height="25.92" fill="#ba43a9"/><rect x="1154.01" y="809.80" width="11.93" height="14.09" fill="#705da0"/><rect x="1154.01" y="798.26" width="11.93" height="11.54" fill="#508642"/><rect x="1154.01" y="790.70" width="11.93" height="7.55" fill="#d0a626"/><rect x="1172.22" y="912.94" width="11.93" height="6.66" fill="#7eb26d"/><rect x="1172.22" y="901.35" width="11.93" height="11.59" fill="#eab839"/><rect x="1172.22" y="894.49" width="11.93" height="6.87" fill="#6ed0e0"/><rect x="1172.22" y="887.06" width="11.93" height="7.43" fill="#ef843c"/><rect x="1172.22" y="884.06" width="11.93" height="2.99" fill="#e24d42"/><rect x="1172.22" y="849.03" width="11.93" height="35.03" fill="#1f78c1"/><rect x="1172.22" y="822.29" width="11.93" height="26.74" fill="#ba43a9"/><rect x="1172.22" y="808.26" width="11.93" height="14.03" fill="#705da0"/><rect x="1172.22" y="796.84" width="11.93" height="11.42" fill="#508642"/><rect x="1172.22" y="789.42" width="11.93" height="7.42" fill="#d0a626"/><rect x="1190.43" y="912.88" width="11.93" height="6.72" fill="#7eb26d"/><rect x="1190.43" y="901.28" width="11.93" height="11.60" fill="#eab839"/><rect x="1190.43" y="894.47" width="11.93" height="6.81" fill="#6ed0e0"/><rect x="1190.43" y="886.89" width="11.93" height="7.58" fill="#ef843c"/><rect x="1190.43" y="883.88" width="11.93" height="3.01" fill="#e24d42"/><rect x="1190.43" y="848.31" width="11.93" height="35.57" fill="#1f78c1"/><rect x="1190.43" y="821.85" width="11.93" height="26.46" fill="#ba43a9"/><rect x="1190.43" y="807.96" width="11.93" height="13.89" fill="#705da0"/><rect x="1190.43" y="796.50" width="11.93" height="11.46" fill="#508642"/><rect x="1190.43" y="789.13" width="11.93" height="7.36" fill="#d0a626"/><rect x="1208.64" y="912.87" width="11.93" height="6.73" fill="#7eb26d"/><rect x="1208.64" y="901.29" width="11.93" height="11.58" fill="#eab839"/><rect x="1208.64" y="894.41" width="11.93" height="6.88" fill="#6ed0e0"/><rect x="1208.64" y="886.76" width="11.93" height="7.65" fill="#ef843c"/><rect x="1208.64" y="883.71" width="11.93" height="3.05" fill="#e24d42"/><rect x="1208.64" y="848.38" width="11.93" height="35.33" fill="#1f78c1"/><rect x="1208.64" y="821.06" width="11.93" height="27.32" fill="#ba43a9"/><rect x="1208.64" y="807.20" width="11.93" height="13.86" fill="#705da0"/><rect x="1208.64" y="795.62" width="11.93" height="11.58" fill="#508642"/><rect x="1208.64" y="788.13" width="11.93" height="7.49" fill="#d0a626"/><rect x="1226.85" y="912.95" width="11.93" height="6.65" fill="#7eb26d"/><rect x="1226.85" y="901.36" width="11.93" height="11.59" fill="#eab839"/><rect x="1226.85" y="894.51" width="11.93" height="6.85" fill="#6ed0e0"/><rect x="1226.85" y="886.80" width="11.93" height="7.71" fill="#ef843c"/><rect x="1226.85" y="883.78" width="11.93" height="3.02" fill="#e24d42"/><rect x="1226.85" y="848.67" width="11.93" height="35.10" fill="#1f78c1"/><rect x="1226.85" y="822.03" width="11.93" height="26.65" fill="#ba43a9"/><rect x="1226.85" y="808.30" width="11.93" height="13.73" fill="#705da0"/><rect x="1226.85" y="796.69" width="11.93" height="11.60" fill="#508642"/><rect x="1226.85" y="789.13" width="11.93" height="7.56" fill="#d0a626"/><rect x="1245.06" y="899.88" width="11.93" height="19.72" fill="#7eb26d"/><rect x="1245.06" y="888.30" width="11.93" height="11.57" fill="#eab839"/><rect x="1245.06" y="881.16" width="11.93" height="7.14" fill="#6ed0e0"/><rect x="1245.06" y="873.73" width="11.93" height="7.43" fill="#ef843c"/><rect x="1245.06" y="870.87" width="11.93" height="2.86" fill="#e24d42"/><rect x="1245.06" y="835.15" width="11.93" height="35.72" fill="#1f78c1"/><rect x="1245.06" y="806.99" width="11.93" height="28.15" fill="#ba43a9"/><rect x="1245.06" y="793.42" width="11.93" height="13.58" fill="#705da0"/><rect x="1245.06" y="782.13" width="11.93" height="11.29" fill="#508642"/><rect x="1245.06" y="774.99" width="11.93" height="7.14" fill="#d0a626"/><rect x="1263.27" y="899.30" width="1.03" height="20.30" fill="#7eb26d"/><rect x="1263.27" y="887.38" width="1.03" height="11.92" fill="#eab839"/><rect x="1263.27" y="880.02" width="1.03" height="7.36" fill="#6ed0e0"/><rect x="1263.27" y="872.37" width="1.03" height="7.65" fill="#ef843c"/><rect x="1263.27" y="869.43" width="1.03" height="2.94" fill="#e24d42"/><rect x="1263.27" y="832.64" width="1.03" height="36.78" fill="#1f78c1"/><rect x="1263.27" y="803.66" width="1.03" height="28.99" fill="#ba43a9"/><rect x="1263.27" y="789.68" width="1.03" height="13.98" fill="#705da0"/><rect x="1263.27" y="778.06" width="1.03" height="11.62" fill="#508642"/><rect x="1263.27" y="770.70" width="1.03" height="7.36" fill="#d0a626"/></svg>
<div style="position:absolute;top:913.00px;height:14px;line-height:14px;font-size:10.2px;color:#ccccdc;white-space:nowrap;letter-spacing:-0.1px;right:1193.80px;margin-right:0.1px;">0%</div>
<div style="position:absolute;top:876.80px;height:14px;line-height:14px;font-size:10.2px;color:#ccccdc;white-space:nowrap;letter-spacing:-0.1px;right:1193.80px;margin-right:0.1px;">2.50%</div>
<div style="position:absolute;top:841.10px;height:14px;line-height:14px;font-size:10.2px;color:#ccccdc;white-space:nowrap;letter-spacing:-0.1px;right:1193.80px;margin-right:0.1px;">5%</div>
<div style="position:absolute;top:805.80px;height:14px;line-height:14px;font-size:10.2px;color:#ccccdc;white-space:nowrap;letter-spacing:-0.1px;right:1193.80px;margin-right:0.1px;">7.50%</div>
<div style="position:absolute;top:770.10px;height:14px;line-height:14px;font-size:10.2px;color:#ccccdc;white-space:nowrap;letter-spacing:-0.1px;right:1193.80px;margin-right:0.1px;">10%</div>
<div style="position:absolute;top:734.40px;height:14px;line-height:14px;font-size:10.2px;color:#ccccdc;white-space:nowrap;letter-spacing:-0.1px;right:1193.80px;margin-right:0.1px;">12.5%</div>
<div style="position:absolute;top:926.10px;height:14px;line-height:14px;font-size:10.2px;color:#ccccdc;white-space:nowrap;left:471.60px;width:600px;text-align:center;">18:16</div>
<div style="position:absolute;top:926.10px;height:14px;line-height:14px;font-size:10.2px;color:#ccccdc;white-space:nowrap;left:544.44px;width:600px;text-align:center;">18:18</div>
<div style="position:absolute;top:926.10px;height:14px;line-height:14px;font-size:10.2px;color:#ccccdc;white-space:nowrap;left:617.28px;width:600px;text-align:center;">18:20</div>
<div style="position:absolute;top:926.10px;height:14px;line-height:14px;font-size:10.2px;color:#ccccdc;white-space:nowrap;left:690.12px;width:600px;text-align:center;">18:22</div>
<div style="position:absolute;top:926.10px;height:14px;line-height:14px;font-size:10.2px;color:#ccccdc;white-space:nowrap;left:762.96px;width:600px;text-align:center;">18:24</div>
<div style="position:absolute;top:926.10px;height:14px;line-height:14px;font-size:10.2px;color:#ccccdc;white-space:nowrap;left:835.80px;width:600px;text-align:center;">18:26</div>
<div style="position:absolute;top:926.10px;height:14px;line-height:14px;font-size:10.2px;color:#ccccdc;white-space:nowrap;left:908.64px;width:600px;text-align:center;">18:28</div>
<svg style="left:0;top:0" width="1907" height="962" viewBox="0 0 1907 962"><rect x="1323.8" y="919.10" width="556.40" height="1" fill="#393b3f"/><rect x="1323.8" y="882.90" width="556.40" height="1" fill="#393b3f"/><rect x="1323.8" y="847.20" width="556.40" height="1" fill="#393b3f"/><rect x="1323.8" y="811.90" width="556.40" height="1" fill="#393b3f"/><rect x="1323.8" y="776.20" width="556.40" height="1" fill="#393b3f"/><rect x="1323.8" y="740.50" width="556.40" height="1" fill="#393b3f"/><rect x="1377.00" y="741" width="1" height="179.10" fill="#393b3f"/><rect x="1451.20" y="741" width="1" height="179.10" fill="#393b3f"/><rect x="1525.40" y="741" width="1" height="179.10" fill="#393b3f"/><rect x="1599.60" y="741" width="1" height="179.10" fill="#393b3f"/><rect x="1673.80" y="741" width="1" height="179.10" fill="#393b3f"/><rect x="1748.00" y="741" width="1" height="179.10" fill="#393b3f"/><rect x="1822.20" y="741" width="1" height="179.10" fill="#393b3f"/><rect x="1323.80" y="916.88" width="10.20" height="2.72" fill="#7eb26d"/><rect x="1323.80" y="908.61" width="10.20" height="8.27" fill="#eab839"/><rect x="1323.80" y="908.26" width="10.20" height="0.35" fill="#6ed0e0"/><rect x="1323.80" y="903.09" width="10.20" height="5.17" fill="#ef843c"/><rect x="1323.80" y="871.59" width="10.20" height="31.50" fill="#1f78c1"/><rect x="1323.80" y="803.53" width="10.20" height="68.06" fill="#ba43a9"/><rect x="1323.80" y="803.17" width="10.20" height="0.36" fill="#705da0"/><rect x="1323.80" y="799.20" width="10.20" height="3.97" fill="#508642"/><rect x="1323.80" y="798.83" width="10.20" height="0.36" fill="#d0a626"/><rect x="1323.80" y="797.25" width="10.20" height="1.59" fill="#447ebc"/><rect x="1323.80" y="788.26" width="10.20" height="8.99" fill="#890f02"/><rect x="1323.80" y="771.18" width="10.20" height="17.08" fill="#0a437c"/><rect x="1340.40" y="916.88" width="12.15" height="2.72" fill="#7eb26d"/><rect x="1340.40" y="908.33" width="12.15" height="8.55" fill="#eab839"/><rect x="1340.40" y="907.98" width="12.15" height="0.35" fill="#6ed0e0"/><rect x="1340.40" y="902.70" width="12.15" height="5.27" fill="#ef843c"/><rect x="1340.40" y="873.48" width="12.15" height="29.23" fill="#1f78c1"/><rect x="1340.40" y="806.08" width="12.15" height="67.39" fill="#ba43a9"/><rect x="1340.40" y="805.72" width="12.15" height="0.36" fill="#705da0"/><rect x="1340.40" y="801.85" width="12.15" height="3.88" fill="#508642"/><rect x="1340.40" y="801.49" width="12.15" height="0.36" fill="#d0a626"/><rect x="1340.40" y="799.88" width="12.15" height="1.61" fill="#447ebc"/><rect x="1340.40" y="791.06" width="12.15" height="8.82" fill="#890f02"/><rect x="1340.40" y="773.86" width="12.15" height="17.20" fill="#0a437c"/><rect x="1358.95" y="916.90" width="12.15" height="2.70" fill="#7eb26d"/><rect x="1358.95" y="908.66" width="12.15" height="8.23" fill="#eab839"/><rect x="1358.95" y="908.31" width="12.15" height="0.36" fill="#6ed0e0"/><rect x="1358.95" y="903.14" width="12.15" height="5.17" fill="#ef843c"/><rect x="1358.95" y="872.94" width="12.15" height="30.19" fill="#1f78c1"/><rect x="1358.95" y="805.13" width="12.15" height="67.82" fill="#ba43a9"/><rect x="1358.95" y="804.77" width="12.15" height="0.36" fill="#705da0"/><rect x="1358.95" y="800.91" width="12.15" height="3.86" fill="#508642"/><rect x="1358.95" y="800.55" width="12.15" height="0.36" fill="#d0a626"/><rect x="1358.95" y="798.92" width="12.15" height="1.63" fill="#447ebc"/><rect x="1358.95" y="790.13" width="12.15" height="8.79" fill="#890f02"/><rect x="1358.95" y="772.97" width="12.15" height="17.16" fill="#0a437c"/><rect x="1377.50" y="916.97" width="12.15" height="2.63" fill="#7eb26d"/><rect x="1377.50" y="908.48" width="12.15" height="8.49" fill="#eab839"/><rect x="1377.50" y="908.13" width="12.15" height="0.35" fill="#6ed0e0"/><rect x="1377.50" y="903.03" width="12.15" height="5.10" fill="#ef843c"/><rect x="1377.50" y="872.74" width="12.15" height="30.29" fill="#1f78c1"/><rect x="1377.50" y="805.15" width="12.15" height="67.59" fill="#ba43a9"/><rect x="1377.50" y="804.80" width="12.15" height="0.35" fill="#705da0"/><rect x="1377.50" y="800.92" width="12.15" height="3.87" fill="#508642"/><rect x="1377.50" y="800.56" width="12.15" height="0.36" fill="#d0a626"/><rect x="1377.50" y="798.95" width="12.15" height="1.61" fill="#447ebc"/><rect x="1377.50" y="790.17" width="12.15" height="8.78" fill="#890f02"/><rect x="1377.50" y="773.15" width="12.15" height="17.02" fill="#0a437c"/><rect x="1396.05" y="916.90" width="12.15" height="2.70" fill="#7eb26d"/><rect x="1396.05" y="908.53" width="12.15" height="8.37" fill="#eab839"/><rect x="1396.05" y="908.18" width="12.15" height="0.35" fill="#6ed0e0"/><rect x="1396.05" y="902.91" width="12.15" height="5.27" fill="#ef843c"/><rect x="1396.05" y="870.42" width="12.15" height="32.49" fill="#1f78c1"/><rect x="1396.05" y="801.98" width="12.15" height="68.45" fill="#ba43a9"/><rect x="1396.05" y="801.62" width="12.15" height="0.36" fill="#705da0"/><rect x="1396.05" y="797.75" width="12.15" height="3.86" fill="#508642"/><rect x="1396.05" y="797.39" width="12.15" height="0.36" fill="#d0a626"/><rect x="1396.05" y="795.79" width="12.15" height="1.60" fill="#447ebc"/><rect x="1396.05" y="786.84" width="12.15" height="8.95" fill="#890f02"/><rect x="1396.05" y="769.22" width="12.15" height="17.62" fill="#0a437c"/><rect x="1414.60" y="916.95" width="12.15" height="2.65" fill="#7eb26d"/><rect x="1414.60" y="908.68" width="12.15" height="8.27" fill="#eab839"/><rect x="1414.60" y="908.32" width="12.15" height="0.36" fill="#6ed0e0"/><rect x="1414.60" y="903.19" width="12.15" height="5.13" fill="#ef843c"/><rect x="1414.60" y="870.75" width="12.15" height="32.45" fill="#1f78c1"/><rect x="1414.60" y="801.48" width="12.15" height="69.27" fill="#ba43a9"/><rect x="1414.60" y="801.13" width="12.15" height="0.35" fill="#705da0"/><rect x="1414.60" y="797.23" width="12.15" height="3.90" fill="#508642"/><rect x="1414.60" y="796.87" width="12.15" height="0.35" fill="#d0a626"/><rect x="1414.60" y="795.25" width="12.15" height="1.62" fill="#447ebc"/><rect x="1414.60" y="786.32" width="12.15" height="8.93" fill="#890f02"/><rect x="1414.60" y="769.22" width="12.15" height="17.10" fill="#0a437c"/><rect x="1433.15" y="916.94" width="12.15" height="2.66" fill="#7eb26d"/><rect x="1433.15" y="908.70" width="12.15" height="8.23" fill="#eab839"/><rect x="1433.15" y="908.35" width="12.15" height="0.35" fill="#6ed0e0"/><rect x="1433.15" y="903.27" width="12.15" height="5.08" fill="#ef843c"/><rect x="1433.15" y="871.83" width="12.15" height="31.44" fill="#1f78c1"/><rect x="1433.15" y="804.00" width="12.15" height="67.83" fill="#ba43a9"/><rect x="1433.15" y="803.64" width="12.15" height="0.36" fill="#705da0"/><rect x="1433.15" y="799.65" width="12.15" height="4.00" fill="#508642"/><rect x="1433.15" y="799.30" width="12.15" height="0.35" fill="#d0a626"/><rect x="1433.15" y="797.67" width="12.15" height="1.63" fill="#447ebc"/><rect x="1433.15" y="788.74" width="12.15" height="8.93" fill="#890f02"/><rect x="1433.15" y="771.18" width="12.15" height="17.56" fill="#0a437c"/><rect x="1451.70" y="916.93" width="12.15" height="2.67" fill="#7eb26d"/><rect x="1451.70" y="908.54" width="12.15" height="8.40" fill="#eab839"/><rect x="1451.70" y="908.18" width="12.15" height="0.36" fill="#6ed0e0"/><rect x="1451.70" y="902.90" width="12.15" height="5.28" fill="#ef843c"/><rect x="1451.70" y="874.00" width="12.15" height="28.89" fill="#1f78c1"/><rect x="1451.70" y="808.30" width="12.15" height="65.70" fill="#ba43a9"/><rect x="1451.70" y="807.94" width="12.15" height="0.36" fill="#705da0"/><rect x="1451.70" y="804.03" width="12.15" height="3.91" fill="#508642"/><rect x="1451.70" y="803.67" width="12.15" height="0.36" fill="#d0a626"/><rect x="1451.70" y="802.09" width="12.15" height="1.58" fill="#447ebc"/><rect x="1451.70" y="793.32" width="12.15" height="8.78" fill="#890f02"/><rect x="1451.70" y="775.83" width="12.15" height="17.49" fill="#0a437c"/><rect x="1470.25" y="916.95" width="12.15" height="2.65" fill="#7eb26d"/><rect x="1470.25" y="908.67" width="12.15" height="8.28" fill="#eab839"/><rect x="1470.25" y="908.31" width="12.15" height="0.35" fill="#6ed0e0"/><rect x="1470.25" y="903.06" width="12.15" height="5.25" fill="#ef843c"/><rect x="1470.25" y="873.22" width="12.15" height="29.85" fill="#1f78c1"/><rect x="1470.25" y="807.26" width="12.15" height="65.96" fill="#ba43a9"/><rect x="1470.25" y="806.91" width="12.15" height="0.35" fill="#705da0"/><rect x="1470.25" y="803.01" width="12.15" height="3.90" fill="#508642"/><rect x="1470.25" y="802.65" width="12.15" height="0.36" fill="#d0a626"/><rect x="1470.25" y="801.07" width="12.15" height="1.59" fill="#447ebc"/><rect x="1470.25" y="792.22" width="12.15" height="8.85" fill="#890f02"/><rect x="1470.25" y="774.58" width="12.15" height="17.64" fill="#0a437c"/><rect x="1488.80" y="916.87" width="12.15" height="2.73" fill="#7eb26d"/><rect x="1488.80" y="908.46" width="12.15" height="8.41" fill="#eab839"/><rect x="1488.80" y="908.11" width="12.15" height="0.35" fill="#6ed0e0"/><rect x="1488.80" y="902.83" width="12.15" height="5.28" fill="#ef843c"/><rect x="1488.80" y="873.03" width="12.15" height="29.80" fill="#1f78c1"/><rect x="1488.80" y="807.43" width="12.15" height="65.60" fill="#ba43a9"/><rect x="1488.80" y="807.08" width="12.15" height="0.36" fill="#705da0"/><rect x="1488.80" y="803.15" width="12.15" height="3.93" fill="#508642"/><rect x="1488.80" y="802.79" width="12.15" height="0.36" fill="#d0a626"/><rect x="1488.80" y="801.21" width="12.15" height="1.59" fill="#447ebc"/><rect x="1488.80" y="792.45" width="12.15" height="8.75" fill="#890f02"/><rect x="1488.80" y="775.29" width="12.15" height="17.16" fill="#0a437c"/><rect x="1507.35" y="916.96" width="12.15" height="2.64" fill="#7eb26d"/><rect x="1507.35" y="908.60" width="12.15" height="8.36" fill="#eab839"/><rect x="1507.35" y="908.25" width="12.15" height="0.35" fill="#6ed0e0"/><rect x="1507.35" y="903.17" width="12.15" height="5.08" fill="#ef843c"/><rect x="1507.35" y="873.09" width="12.15" height="30.08" fill="#1f78c1"/><rect x="1507.35" y="805.37" width="12.15" height="67.72" fill="#ba43a9"/><rect x="1507.35" y="805.01" width="12.15" height="0.36" fill="#705da0"/><rect x="1507.35" y="801.04" width="12.15" height="3.97" fill="#508642"/><rect x="1507.35" y="800.68" width="12.15" height="0.36" fill="#d0a626"/><rect x="1507.35" y="799.06" width="12.15" height="1.62" fill="#447ebc"/><rect x="1507.35" y="790.17" width="12.15" height="8.89" fill="#890f02"/><rect x="1507.35" y="772.97" width="12.15" height="17.20" fill="#0a437c"/><rect x="1525.90" y="916.87" width="12.15" height="2.73" fill="#7eb26d"/><rect x="1525.90" y="908.59" width="12.15" height="8.28" fill="#eab839"/><rect x="1525.90" y="908.23" width="12.15" height="0.36" fill="#6ed0e0"/><rect x="1525.90" y="903.02" width="12.15" height="5.21" fill="#ef843c"/><rect x="1525.90" y="874.02" width="12.15" height="29.00" fill="#1f78c1"/><rect x="1525.90" y="807.69" width="12.15" height="66.33" fill="#ba43a9"/><rect x="1525.90" y="807.33" width="12.15" height="0.36" fill="#705da0"/><rect x="1525.90" y="803.37" width="12.15" height="3.97" fill="#508642"/><rect x="1525.90" y="803.01" width="12.15" height="0.36" fill="#d0a626"/><rect x="1525.90" y="801.42" width="12.15" height="1.58" fill="#447ebc"/><rect x="1525.90" y="792.49" width="12.15" height="8.93" fill="#890f02"/><rect x="1525.90" y="774.93" width="12.15" height="17.56" fill="#0a437c"/><rect x="1544.45" y="916.89" width="12.15" height="2.71" fill="#7eb26d"/><rect x="1544.45" y="908.38" width="12.15" height="8.50" fill="#eab839"/><rect x="1544.45" y="908.03" width="12.15" height="0.36" fill="#6ed0e0"/><rect x="1544.45" y="902.77" width="12.15" height="5.26" fill="#ef843c"/><rect x="1544.45" y="870.09" width="12.15" height="32.68" fill="#1f78c1"/><rect x="1544.45" y="800.85" width="12.15" height="69.24" fill="#ba43a9"/><rect x="1544.45" y="800.50" width="12.15" height="0.35" fill="#705da0"/><rect x="1544.45" y="796.63" width="12.15" height="3.87" fill="#508642"/><rect x="1544.45" y="796.27" width="12.15" height="0.36" fill="#d0a626"/><rect x="1544.45" y="794.69" width="12.15" height="1.58" fill="#447ebc"/><rect x="1544.45" y="785.74" width="12.15" height="8.95" fill="#890f02"/><rect x="1544.45" y="768.33" width="12.15" height="17.41" fill="#0a437c"/><rect x="1563.00" y="916.91" width="12.15" height="2.69" fill="#7eb26d"/><rect x="1563.00" y="908.45" width="12.15" height="8.45" fill="#eab839"/><rect x="1563.00" y="908.10" width="12.15" height="0.36" fill="#6ed0e0"/><rect x="1563.00" y="903.02" width="12.15" height="5.08" fill="#ef843c"/><rect x="1563.00" y="869.75" width="12.15" height="33.27" fill="#1f78c1"/><rect x="1563.00" y="799.12" width="12.15" height="70.62" fill="#ba43a9"/><rect x="1563.00" y="798.76" width="12.15" height="0.36" fill="#705da0"/><rect x="1563.00" y="794.81" width="12.15" height="3.95" fill="#508642"/><rect x="1563.00" y="794.46" width="12.15" height="0.35" fill="#d0a626"/><rect x="1563.00" y="792.84" width="12.15" height="1.62" fill="#447ebc"/><rect x="1563.00" y="784.06" width="12.15" height="8.78" fill="#890f02"/><rect x="1563.00" y="766.90" width="12.15" height="17.16" fill="#0a437c"/><rect x="1581.55" y="916.90" width="12.15" height="2.70" fill="#7eb26d"/><rect x="1581.55" y="908.60" width="12.15" height="8.30" fill="#eab839"/><rect x="1581.55" y="908.24" width="12.15" height="0.36" fill="#6ed0e0"/><rect x="1581.55" y="902.96" width="12.15" height="5.28" fill="#ef843c"/><rect x="1581.55" y="868.34" width="12.15" height="34.62" fill="#1f78c1"/><rect x="1581.55" y="795.59" width="12.15" height="72.75" fill="#ba43a9"/><rect x="1581.55" y="795.23" width="12.15" height="0.36" fill="#705da0"/><rect x="1581.55" y="791.26" width="12.15" height="3.97" fill="#508642"/><rect x="1581.55" y="790.90" width="12.15" height="0.36" fill="#d0a626"/><rect x="1581.55" y="789.28" width="12.15" height="1.62" fill="#447ebc"/><rect x="1581.55" y="780.48" width="12.15" height="8.80" fill="#890f02"/><rect x="1581.55" y="763.32" width="12.15" height="17.15" fill="#0a437c"/><rect x="1600.10" y="916.89" width="12.15" height="2.71" fill="#7eb26d"/><rect x="1600.10" y="908.57" width="12.15" height="8.33" fill="#eab839"/><rect x="1600.10" y="908.21" width="12.15" height="0.36" fill="#6ed0e0"/><rect x="1600.10" y="903.13" width="12.15" height="5.08" fill="#ef843c"/><rect x="1600.10" y="873.49" width="12.15" height="29.64" fill="#1f78c1"/><rect x="1600.10" y="806.12" width="12.15" height="67.37" fill="#ba43a9"/><rect x="1600.10" y="805.76" width="12.15" height="0.36" fill="#705da0"/><rect x="1600.10" y="801.80" width="12.15" height="3.96" fill="#508642"/><rect x="1600.10" y="801.45" width="12.15" height="0.35" fill="#d0a626"/><rect x="1600.10" y="799.84" width="12.15" height="1.61" fill="#447ebc"/><rect x="1600.10" y="790.92" width="12.15" height="8.92" fill="#890f02"/><rect x="1600.10" y="773.86" width="12.15" height="17.06" fill="#0a437c"/><rect x="1618.65" y="916.88" width="12.15" height="2.72" fill="#7eb26d"/><rect x="1618.65" y="908.59" width="12.15" height="8.29" fill="#eab839"/><rect x="1618.65" y="908.22" width="12.15" height="0.36" fill="#6ed0e0"/><rect x="1618.65" y="902.95" width="12.15" height="5.27" fill="#ef843c"/><rect x="1618.65" y="871.91" width="12.15" height="31.04" fill="#1f78c1"/><rect x="1618.65" y="802.73" width="12.15" height="69.19" fill="#ba43a9"/><rect x="1618.65" y="802.36" width="12.15" height="0.36" fill="#705da0"/><rect x="1618.65" y="798.44" width="12.15" height="3.92" fill="#508642"/><rect x="1618.65" y="798.09" width="12.15" height="0.35" fill="#d0a626"/><rect x="1618.65" y="796.50" width="12.15" height="1.59" fill="#447ebc"/><rect x="1618.65" y="787.67" width="12.15" height="8.83" fill="#890f02"/><rect x="1618.65" y="770.29" width="12.15" height="17.38" fill="#0a437c"/><rect x="1637.20" y="916.96" width="12.15" height="2.64" fill="#7eb26d"/><rect x="1637.20" y="908.56" width="12.15" height="8.40" fill="#eab839"/><rect x="1637.20" y="908.19" width="12.15" height="0.36" fill="#6ed0e0"/><rect x="1637.20" y="903.09" width="12.15" height="5.10" fill="#ef843c"/><rect x="1637.20" y="873.74" width="12.15" height="29.35" fill="#1f78c1"/><rect x="1637.20" y="806.51" width="12.15" height="67.23" fill="#ba43a9"/><rect x="1637.20" y="806.15" width="12.15" height="0.36" fill="#705da0"/><rect x="1637.20" y="802.26" width="12.15" height="3.89" fill="#508642"/><rect x="1637.20" y="801.90" width="12.15" height="0.36" fill="#d0a626"/><rect x="1637.20" y="800.29" width="12.15" height="1.61" fill="#447ebc"/><rect x="1637.20" y="791.54" width="12.15" height="8.75" fill="#890f02"/><rect x="1637.20" y="774.22" width="12.15" height="17.32" fill="#0a437c"/><rect x="1655.75" y="916.93" width="12.15" height="2.67" fill="#7eb26d"/><rect x="1655.75" y="908.60" width="12.15" height="8.33" fill="#eab839"/><rect x="1655.75" y="908.25" width="12.15" height="0.35" fill="#6ed0e0"/><rect x="1655.75" y="903.10" width="12.15" height="5.15" fill="#ef843c"/><rect x="1655.75" y="875.06" width="12.15" height="28.04" fill="#1f78c1"/><rect x="1655.75" y="812.34" width="12.15" height="62.73" fill="#ba43a9"/><rect x="1655.75" y="811.98" width="12.15" height="0.36" fill="#705da0"/><rect x="1655.75" y="807.99" width="12.15" height="3.98" fill="#508642"/><rect x="1655.75" y="807.64" width="12.15" height="0.35" fill="#d0a626"/><rect x="1655.75" y="806.01" width="12.15" height="1.63" fill="#447ebc"/><rect x="1655.75" y="796.93" width="12.15" height="9.07" fill="#890f02"/><rect x="1655.75" y="779.76" width="12.15" height="17.18" fill="#0a437c"/><rect x="1674.30" y="916.93" width="12.15" height="2.67" fill="#7eb26d"/><rect x="1674.30" y="908.58" width="12.15" height="8.36" fill="#eab839"/><rect x="1674.30" y="908.21" width="12.15" height="0.36" fill="#6ed0e0"/><rect x="1674.30" y="903.01" width="12.15" height="5.20" fill="#ef843c"/><rect x="1674.30" y="875.61" width="12.15" height="27.41" fill="#1f78c1"/><rect x="1674.30" y="812.29" width="12.15" height="63.32" fill="#ba43a9"/><rect x="1674.30" y="811.94" width="12.15" height="0.35" fill="#705da0"/><rect x="1674.30" y="808.07" width="12.15" height="3.87" fill="#508642"/><rect x="1674.30" y="807.71" width="12.15" height="0.36" fill="#d0a626"/><rect x="1674.30" y="806.12" width="12.15" height="1.59" fill="#447ebc"/><rect x="1674.30" y="797.28" width="12.15" height="8.84" fill="#890f02"/><rect x="1674.30" y="780.11" width="12.15" height="17.16" fill="#0a437c"/><rect x="1692.85" y="916.92" width="12.15" height="2.68" fill="#7eb26d"/><rect x="1692.85" y="908.63" width="12.15" height="8.29" fill="#eab839"/><rect x="1692.85" y="908.27" width="12.15" height="0.36" fill="#6ed0e0"/><rect x="1692.85" y="903.00" width="12.15" height="5.27" fill="#ef843c"/><rect x="1692.85" y="873.65" width="12.15" height="29.35" fill="#1f78c1"/><rect x="1692.85" y="807.58" width="12.15" height="66.08" fill="#ba43a9"/><rect x="1692.85" y="807.22" width="12.15" height="0.36" fill="#705da0"/><rect x="1692.85" y="803.22" width="12.15" height="4.00" fill="#508642"/><rect x="1692.85" y="802.86" width="12.15" height="0.36" fill="#d0a626"/><rect x="1692.85" y="801.24" width="12.15" height="1.62" fill="#447ebc"/><rect x="1692.85" y="792.22" width="12.15" height="9.01" fill="#890f02"/><rect x="1692.85" y="774.93" width="12.15" height="17.29" fill="#0a437c"/><rect x="1711.40" y="916.89" width="12.15" height="2.71" fill="#7eb26d"/><rect x="1711.40" y="908.45" width="12.15" height="8.44" fill="#eab839"/><rect x="1711.40" y="908.10" width="12.15" height="0.35" fill="#6ed0e0"/><rect x="1711.40" y="903.01" width="12.15" height="5.09" fill="#ef843c"/><rect x="1711.40" y="874.07" width="12.15" height="28.94" fill="#1f78c1"/><rect x="1711.40" y="807.89" width="12.15" height="66.18" fill="#ba43a9"/><rect x="1711.40" y="807.54" width="12.15" height="0.35" fill="#705da0"/><rect x="1711.40" y="803.64" width="12.15" height="3.90" fill="#508642"/><rect x="1711.40" y="803.28" width="12.15" height="0.36" fill="#d0a626"/><rect x="1711.40" y="801.64" width="12.15" height="1.64" fill="#447ebc"/><rect x="1711.40" y="792.66" width="12.15" height="8.99" fill="#890f02"/><rect x="1711.40" y="775.47" width="12.15" height="17.19" fill="#0a437c"/><rect x="1729.95" y="916.91" width="12.15" height="2.69" fill="#7eb26d"/><rect x="1729.95" y="908.56" width="12.15" height="8.36" fill="#eab839"/><rect x="1729.95" y="908.20" width="12.15" height="0.35" fill="#6ed0e0"/><rect x="1729.95" y="903.09" width="12.15" height="5.11" fill="#ef843c"/><rect x="1729.95" y="871.34" width="12.15" height="31.75" fill="#1f78c1"/><rect x="1729.95" y="802.82" width="12.15" height="68.52" fill="#ba43a9"/><rect x="1729.95" y="802.47" width="12.15" height="0.35" fill="#705da0"/><rect x="1729.95" y="798.48" width="12.15" height="3.99" fill="#508642"/><rect x="1729.95" y="798.11" width="12.15" height="0.36" fill="#d0a626"/><rect x="1729.95" y="796.51" width="12.15" height="1.60" fill="#447ebc"/><rect x="1729.95" y="787.69" width="12.15" height="8.82" fill="#890f02"/><rect x="1729.95" y="770.65" width="12.15" height="17.04" fill="#0a437c"/><rect x="1748.50" y="916.94" width="12.15" height="2.66" fill="#7eb26d"/><rect x="1748.50" y="908.68" width="12.15" height="8.26" fill="#eab839"/><rect x="1748.50" y="908.33" width="12.15" height="0.35" fill="#6ed0e0"/><rect x="1748.50" y="903.20" width="12.15" height="5.13" fill="#ef843c"/><rect x="1748.50" y="872.76" width="12.15" height="30.44" fill="#1f78c1"/><rect x="1748.50" y="805.14" width="12.15" height="67.62" fill="#ba43a9"/><rect x="1748.50" y="804.79" width="12.15" height="0.36" fill="#705da0"/><rect x="1748.50" y="800.87" width="12.15" height="3.92" fill="#508642"/><rect x="1748.50" y="800.51" width="12.15" height="0.36" fill="#d0a626"/><rect x="1748.50" y="798.91" width="12.15" height="1.60" fill="#447ebc"/><rect x="1748.50" y="790.14" width="12.15" height="8.77" fill="#890f02"/><rect x="1748.50" y="772.97" width="12.15" height="17.17" fill="#0a437c"/><rect x="1767.05" y="916.87" width="12.15" height="2.73" fill="#7eb26d"/><rect x="1767.05" y="908.60" width="12.15" height="8.27" fill="#eab839"/><rect x="1767.05" y="908.25" width="12.15" height="0.36" fill="#6ed0e0"/><rect x="1767.05" y="903.04" width="12.15" height="5.21" fill="#ef843c"/><rect x="1767.05" y="870.52" width="12.15" height="32.52" fill="#1f78c1"/><rect x="1767.05" y="800.64" width="12.15" height="69.88" fill="#ba43a9"/><rect x="1767.05" y="800.29" width="12.15" height="0.35" fill="#705da0"/><rect x="1767.05" y="796.37" width="12.15" height="3.91" fill="#508642"/><rect x="1767.05" y="796.02" width="12.15" height="0.36" fill="#d0a626"/><rect x="1767.05" y="794.38" width="12.15" height="1.64" fill="#447ebc"/><rect x="1767.05" y="785.32" width="12.15" height="9.06" fill="#890f02"/><rect x="1767.05" y="768.33" width="12.15" height="16.99" fill="#0a437c"/><rect x="1785.60" y="916.97" width="12.15" height="2.63" fill="#7eb26d"/><rect x="1785.60" y="908.51" width="12.15" height="8.46" fill="#eab839"/><rect x="1785.60" y="908.14" width="12.15" height="0.36" fill="#6ed0e0"/><rect x="1785.60" y="902.97" width="12.15" height="5.17" fill="#ef843c"/><rect x="1785.60" y="871.77" width="12.15" height="31.20" fill="#1f78c1"/><rect x="1785.60" y="802.87" width="12.15" height="68.91" fill="#ba43a9"/><rect x="1785.60" y="802.50" width="12.15" height="0.36" fill="#705da0"/><rect x="1785.60" y="798.52" width="12.15" height="3.98" fill="#508642"/><rect x="1785.60" y="798.16" width="12.15" height="0.36" fill="#d0a626"/><rect x="1785.60" y="796.52" width="12.15" height="1.64" fill="#447ebc"/><rect x="1785.60" y="787.73" width="12.15" height="8.79" fill="#890f02"/><rect x="1785.60" y="770.65" width="12.15" height="17.08" fill="#0a437c"/><rect x="1804.15" y="916.92" width="12.15" height="2.68" fill="#7eb26d"/><rect x="1804.15" y="908.46" width="12.15" height="8.46" fill="#eab839"/><rect x="1804.15" y="908.10" width="12.15" height="0.36" fill="#6ed0e0"/><rect x="1804.15" y="902.87" width="12.15" height="5.23" fill="#ef843c"/><rect x="1804.15" y="871.18" width="12.15" height="31.70" fill="#1f78c1"/><rect x="1804.15" y="802.63" width="12.15" height="68.55" fill="#ba43a9"/><rect x="1804.15" y="802.27" width="12.15" height="0.36" fill="#705da0"/><rect x="1804.15" y="798.41" width="12.15" height="3.86" fill="#508642"/><rect x="1804.15" y="798.05" width="12.15" height="0.36" fill="#d0a626"/><rect x="1804.15" y="796.46" width="12.15" height="1.59" fill="#447ebc"/><rect x="1804.15" y="787.48" width="12.15" height="8.98" fill="#890f02"/><rect x="1804.15" y="770.29" width="12.15" height="17.19" fill="#0a437c"/><rect x="1822.70" y="916.96" width="12.15" height="2.64" fill="#7eb26d"/><rect x="1822.70" y="908.65" width="12.15" height="8.31" fill="#eab839"/><rect x="1822.70" y="908.29" width="12.15" height="0.36" fill="#6ed0e0"/><rect x="1822.70" y="903.07" width="12.15" height="5.22" fill="#ef843c"/><rect x="1822.70" y="873.63" width="12.15" height="29.44" fill="#1f78c1"/><rect x="1822.70" y="806.61" width="12.15" height="67.02" fill="#ba43a9"/><rect x="1822.70" y="806.25" width="12.15" height="0.36" fill="#705da0"/><rect x="1822.70" y="802.34" width="12.15" height="3.91" fill="#508642"/><rect x="1822.70" y="801.99" width="12.15" height="0.35" fill="#d0a626"/><rect x="1822.70" y="800.38" width="12.15" height="1.61" fill="#447ebc"/><rect x="1822.70" y="791.52" width="12.15" height="8.86" fill="#890f02"/><rect x="1822.70" y="774.22" width="12.15" height="17.30" fill="#0a437c"/><rect x="1841.25" y="916.87" width="12.15" height="2.73" fill="#7eb26d"/><rect x="1841.25" y="908.43" width="12.15" height="8.44" fill="#eab839"/><rect x="1841.25" y="908.07" width="12.15" height="0.36" fill="#6ed0e0"/><rect x="1841.25" y="902.89" width="12.15" height="5.17" fill="#ef843c"/><rect x="1841.25" y="874.21" width="12.15" height="28.68" fill="#1f78c1"/><rect x="1841.25" y="807.21" width="12.15" height="67.00" fill="#ba43a9"/><rect x="1841.25" y="806.85" width="12.15" height="0.36" fill="#705da0"/><rect x="1841.25" y="802.95" width="12.15" height="3.90" fill="#508642"/><rect x="1841.25" y="802.60" width="12.15" height="0.35" fill="#d0a626"/><rect x="1841.25" y="800.99" width="12.15" height="1.61" fill="#447ebc"/><rect x="1841.25" y="792.09" width="12.15" height="8.90" fill="#890f02"/><rect x="1841.25" y="774.93" width="12.15" height="17.16" fill="#0a437c"/><rect x="1859.80" y="917.46" width="12.15" height="2.14" fill="#7eb26d"/><rect x="1859.80" y="908.53" width="12.15" height="8.93" fill="#eab839"/><rect x="1859.80" y="908.17" width="12.15" height="0.36" fill="#6ed0e0"/><rect x="1859.80" y="902.81" width="12.15" height="5.36" fill="#ef843c"/><rect x="1859.80" y="870.66" width="12.15" height="32.15" fill="#1f78c1"/><rect x="1859.80" y="794.76" width="12.15" height="75.91" fill="#ba43a9"/><rect x="1859.80" y="794.22" width="12.15" height="0.54" fill="#705da0"/><rect x="1859.80" y="789.94" width="12.15" height="4.29" fill="#508642"/><rect x="1859.80" y="789.40" width="12.15" height="0.54" fill="#d0a626"/><rect x="1859.80" y="787.97" width="12.15" height="1.43" fill="#447ebc"/><rect x="1859.80" y="779.04" width="12.15" height="8.93" fill="#890f02"/><rect x="1859.80" y="762.07" width="12.15" height="16.97" fill="#0a437c"/><rect x="1878.35" y="917.30" width="1.85" height="2.30" fill="#7eb26d"/><rect x="1878.35" y="907.74" width="1.85" height="9.57" fill="#eab839"/><rect x="1878.35" y="907.35" width="1.85" height="0.38" fill="#6ed0e0"/><rect x="1878.35" y="901.61" width="1.85" height="5.74" fill="#ef843c"/><rect x="1878.35" y="867.17" width="1.85" height="34.44" fill="#1f78c1"/><rect x="1878.35" y="785.84" width="1.85" height="81.33" fill="#ba43a9"/><rect x="1878.35" y="785.27" width="1.85" height="0.57" fill="#705da0"/><rect x="1878.35" y="780.67" width="1.85" height="4.59" fill="#508642"/><rect x="1878.35" y="780.10" width="1.85" height="0.57" fill="#d0a626"/><rect x="1878.35" y="778.57" width="1.85" height="1.53" fill="#447ebc"/><rect x="1878.35" y="769.00" width="1.85" height="9.57" fill="#890f02"/><rect x="1878.35" y="750.82" width="1.85" height="18.18" fill="#0a437c"/></svg>
<div style="position:absolute;top:913.00px;height:14px;line-height:14px;font-size:10.2px;color:#ccccdc;white-space:nowrap;letter-spacing:-0.1px;right:588.10px;margin-right:0.1px;">0%</div>
<div style="position:absolute;top:876.80px;height:14px;line-height:14px;font-size:10.2px;color:#ccccdc;white-space:nowrap;letter-spacing:-0.1px;right:588.10px;margin-right:0.1px;">2%</div>
<div style="position:absolute;top:841.10px;height:14px;line-height:14px;font-size:10.2px;color:#ccccdc;white-space:nowrap;letter-spacing:-0.1px;right:588.10px;margin-right:0.1px;">4%</div>
<div style="position:absolute;top:805.80px;height:14px;line-height:14px;font-size:10.2px;color:#ccccdc;white-space:nowrap;letter-spacing:-0.1px;right:588.10px;margin-right:0.1px;">6%</div>
<div style="position:absolute;top:770.10px;height:14px;line-height:14px;font-size:10.2px;color:#ccccdc;white-space:nowrap;letter-spacing:-0.1px;right:588.10px;margin-right:0.1px;">8%</div>
<div style="position:absolute;top:734.40px;height:14px;line-height:14px;font-size:10.2px;color:#ccccdc;white-space:nowrap;letter-spacing:-0.1px;right:588.10px;margin-right:0.1px;">10%</div>
<div style="position:absolute;top:926.10px;height:14px;line-height:14px;font-size:10.2px;color:#ccccdc;white-space:nowrap;left:1077.50px;width:600px;text-align:center;">18:16</div>
<div style="position:absolute;top:926.10px;height:14px;line-height:14px;font-size:10.2px;color:#ccccdc;white-space:nowrap;left:1151.70px;width:600px;text-align:center;">18:18</div>
<div style="position:absolute;top:926.10px;height:14px;line-height:14px;font-size:10.2px;color:#ccccdc;white-space:nowrap;left:1225.90px;width:600px;text-align:center;">18:20</div>
<div style="position:absolute;top:926.10px;height:14px;line-height:14px;font-size:10.2px;color:#ccccdc;white-space:nowrap;left:1300.10px;width:600px;text-align:center;">18:22</div>
<div style="position:absolute;top:926.10px;height:14px;line-height:14px;font-size:10.2px;color:#ccccdc;white-space:nowrap;left:1374.30px;width:600px;text-align:center;">18:24</div>
<div style="position:absolute;top:926.10px;height:14px;line-height:14px;font-size:10.2px;color:#ccccdc;white-space:nowrap;left:1448.50px;width:600px;text-align:center;">18:26</div>
<div style="position:absolute;top:926.10px;height:14px;line-height:14px;font-size:10.2px;color:#ccccdc;white-space:nowrap;left:1522.70px;width:600px;text-align:center;">18:28</div>
<div style="position:absolute;left:693.00px;top:949.90px;width:12.00px;height:3.40px;background:#7eb26d;border-radius:1px"></div>
<div style="position:absolute;top:944.70px;height:14px;line-height:14px;font-size:10.2px;color:#ccccdc;white-space:nowrap;left:712.00px;">appserver</div>
<div style="position:absolute;left:766.20px;top:949.90px;width:12.00px;height:3.40px;background:#eab839;border-radius:1px"></div>
<div style="position:absolute;top:944.70px;height:14px;line-height:14px;font-size:10.2px;color:#ccccdc;white-space:nowrap;left:784.70px;">autopilot</div>
<div style="position:absolute;left:833.20px;top:949.90px;width:12.00px;height:3.40px;background:#6ed0e0;border-radius:1px"></div>
<div style="position:absolute;top:944.70px;height:14px;line-height:14px;font-size:10.2px;color:#ccccdc;white-space:nowrap;left:851.70px;">backend-master</div>
<div style="position:absolute;left:934.00px;top:949.90px;width:12.00px;height:3.40px;background:#ef843c;border-radius:1px"></div>
<div style="position:absolute;top:944.70px;height:14px;line-height:14px;font-size:10.2px;color:#ccccdc;white-space:nowrap;left:952.50px;">compute-container</div>
<div style="position:absolute;left:1046.50px;top:949.90px;width:12.00px;height:3.40px;background:#e24d42;border-radius:1px"></div>
<div style="position:absolute;top:944.70px;height:14px;line-height:14px;font-size:10.2px;color:#ccccdc;white-space:nowrap;left:1065.00px;">controller</div>
<div style="position:absolute;left:1118.00px;top:949.90px;width:12.00px;height:3.40px;background:#1f78c1;border-radius:1px"></div>
<div style="position:absolute;top:944.70px;height:14px;line-height:14px;font-size:10.2px;color:#ccccdc;white-space:nowrap;left:1136.50px;">node-exporter</div>
<div style="position:absolute;left:1209.10px;top:949.90px;width:12.00px;height:3.40px;background:#ba43a9;border-radius:1px"></div>
<div style="position:absolute;top:944.70px;height:14px;line-height:14px;font-size:10.2px;color:#ccccdc;white-space:nowrap;left:1227.60px;">postgres</div>
<div style="position:absolute;left:1308.00px;top:949.90px;width:12.00px;height:3.40px;background:#7eb26d;border-radius:1px"></div>
<div style="position:absolute;top:944.70px;height:14px;line-height:14px;font-size:10.2px;color:#ccccdc;white-space:nowrap;left:1326.50px;">iowait</div>
<div style="position:absolute;left:1363.20px;top:949.90px;width:12.00px;height:3.40px;background:#eab839;border-radius:1px"></div>
<div style="position:absolute;top:944.70px;height:14px;line-height:14px;font-size:10.2px;color:#ccccdc;white-space:nowrap;left:1381.20px;">irq</div>
<div style="position:absolute;left:1402.10px;top:949.90px;width:12.00px;height:3.40px;background:#6ed0e0;border-radius:1px"></div>
<div style="position:absolute;top:944.70px;height:14px;line-height:14px;font-size:10.2px;color:#ccccdc;white-space:nowrap;left:1420.10px;">nice</div>
<div style="position:absolute;left:1448.20px;top:949.90px;width:12.00px;height:3.40px;background:#ef843c;border-radius:1px"></div>
<div style="position:absolute;top:944.70px;height:14px;line-height:14px;font-size:10.2px;color:#ccccdc;white-space:nowrap;left:1466.70px;">softirq</div>
<div style="position:absolute;left:1505.00px;top:949.90px;width:12.00px;height:3.40px;background:#e24d42;border-radius:1px"></div>
<div style="position:absolute;top:944.70px;height:14px;line-height:14px;font-size:10.2px;color:#ccccdc;white-space:nowrap;left:1523.50px;">steal</div>
<div style="position:absolute;left:1554.00px;top:949.90px;width:12.00px;height:3.40px;background:#1f78c1;border-radius:1px"></div>
<div style="position:absolute;top:944.70px;height:14px;line-height:14px;font-size:10.2px;color:#ccccdc;white-space:nowrap;left:1572.50px;">system</div>
<div style="position:absolute;left:1615.00px;top:949.90px;width:12.00px;height:3.40px;background:#ba43a9;border-radius:1px"></div>
<div style="position:absolute;top:944.70px;height:14px;line-height:14px;font-size:10.2px;color:#ccccdc;white-space:nowrap;left:1633.50px;">user</div>
<div style="position:absolute;left:1662.00px;top:949.90px;width:12.00px;height:3.40px;background:#705da0;border-radius:1px"></div>
<div style="position:absolute;top:944.70px;height:14px;line-height:14px;font-size:10.2px;color:#ccccdc;white-space:nowrap;left:1680.50px;">iowait</div>
<div style="position:absolute;left:1717.00px;top:949.90px;width:12.00px;height:3.40px;background:#508642;border-radius:1px"></div>
<div style="position:absolute;top:944.70px;height:14px;line-height:14px;font-size:10.2px;color:#ccccdc;white-space:nowrap;left:1735.50px;">irq</div>
<div style="position:absolute;left:1755.00px;top:949.90px;width:12.00px;height:3.40px;background:#d0a626;border-radius:1px"></div>
<div style="position:absolute;top:944.70px;height:14px;line-height:14px;font-size:10.2px;color:#ccccdc;white-space:nowrap;left:1773.50px;">nice</div>
<div style="position:absolute;left:1802.00px;top:949.90px;width:12.00px;height:3.40px;background:#447ebc;border-radius:1px"></div>
<div style="position:absolute;top:944.70px;height:14px;line-height:14px;font-size:10.2px;color:#ccccdc;white-space:nowrap;left:1820.50px;">softirq</div>
</div></body></html>
